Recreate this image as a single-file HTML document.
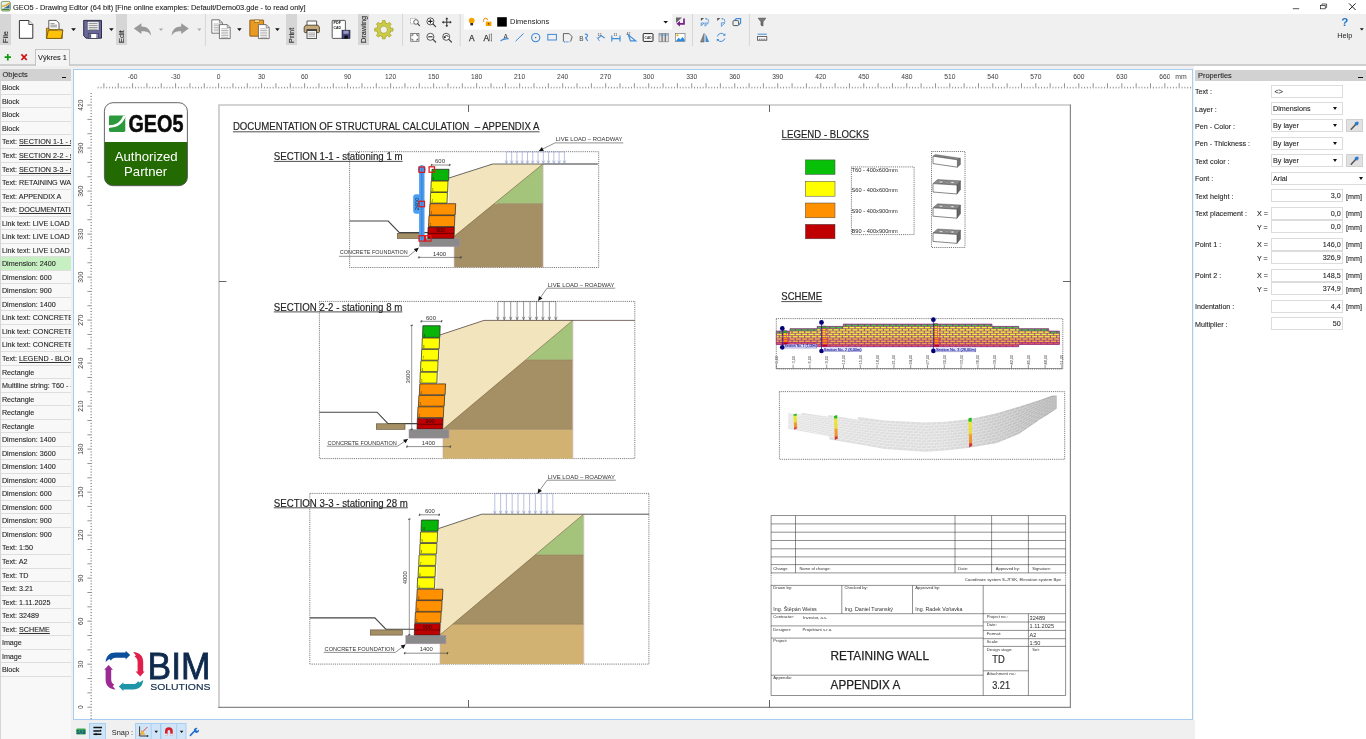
<!DOCTYPE html><html><head><meta charset="utf-8"><title>GEO5 - Drawing Editor</title><style>
*{box-sizing:border-box;margin:0;padding:0}
html,body{width:1366px;height:739px;overflow:hidden;background:#f0f0f0;-webkit-text-stroke:0.1px #333;font-family:"Liberation Sans",sans-serif;font-size:7.4px;color:#1a1a1a}
#wrap{position:absolute;left:0;top:0;width:1366px;height:739px;overflow:hidden;will-change:transform;background:transparent}
#title{position:absolute;left:0;top:0;width:1366px;height:14px;background:#fff}
#title .t{position:absolute;left:13px;top:2.8px;font-size:7.42px;color:#222;white-space:nowrap;letter-spacing:-0.02px}
#tb{position:absolute;left:0;top:14px;width:1366px;height:33px;background:#f0f0f0}
.vlab{position:absolute;top:14px;width:11px;height:31px;background:#d6d6d6}
.vlab span{position:absolute;left:1.2px;bottom:2px;transform-origin:0 100%;transform:translate(9.2px,0) rotate(-90deg);font-size:7.4px;line-height:8px;white-space:nowrap;color:#222}
.sep{position:absolute;width:1px;background:#d0d0d0}
#tabs{position:absolute;left:0;top:47px;width:1366px;height:19px;background:#f0f0f0}
#tabline{position:absolute;left:0;top:64px;width:1366px;height:2px;background:#cfcfcf}
#tab1{position:absolute;left:35px;top:49px;width:35px;height:17px;background:#f4f4f4;border:1px solid #c4c4c4;border-bottom:none;font-size:7.4px;line-height:16px;text-align:center;color:#222}
#lp{position:absolute;left:0;top:69px;width:71px;height:670px;background:#f8f8f8;border-left:1px solid #d6d6d6;overflow:hidden}
.hdr{position:absolute;height:11.5px;background:#d2d2d2;font-size:7.4px;line-height:11px;color:#222}
.row{position:absolute;left:0px;width:70.5px;height:13.55px;background:#f8f8f8;border-bottom:1px solid #dedede;font-size:7.2px;line-height:14.8px;padding-left:0.9px;white-space:nowrap;overflow:hidden;color:#1a1a1a}
.row u{text-decoration:underline}
.row.sel{background:#c6efc2}
#cv{position:absolute;left:73px;top:69px;width:1120px;height:651px;background:#fff;border:1px solid #a8cdf0;overflow:hidden}
#rp{position:absolute;left:1194.4px;top:66px;width:171.6px;height:673px;background:#fff}
.lbl{position:absolute;font-size:7.15px;white-space:nowrap;color:#1a1a1a;line-height:10px}
.inp{position:absolute;left:1271px;width:72px;height:13px;background:#fff;border:1px solid #dcdcdc;font-size:7.2px;line-height:11px;padding:0 2.6px;white-space:nowrap;color:#1a1a1a}
.inp.r{text-align:right}
.inp .arr{position:absolute;right:4.6px;top:4.2px;width:0;height:0;border-left:2.9px solid transparent;border-right:2.9px solid transparent;border-top:3.1px solid #111}
.btn{position:absolute;left:1346px;width:17px;height:13px;background:#e1e1e1;border:1px solid #d0d0d0}
#bb{position:absolute;left:71.5px;top:720px;width:1123px;height:19px;background:#f0f0f0}
svg{position:absolute;left:0;top:0;overflow:visible}
svg text{font-family:"Liberation Sans",sans-serif}
</style></head><body><div id="wrap">
<div id="title"><div class="t">GEO5 - Drawing Editor (64 bit) [Fine online examples: Default/Demo03.gde - to read only]</div></div>
<div id="tb"></div>
<div class="vlab" style="left:0px;width:11px"><span>File</span></div>
<div class="vlab" style="left:116px;width:11px"><span>Edit</span></div>
<div class="vlab" style="left:286px;width:11px"><span>Print</span></div>
<div class="vlab" style="left:358px;width:11px"><span>Drawing</span></div>
<div id="tabs"></div><div id="tabline"></div><div id="tab1">Výkres 1</div>
<div id="lp">
<div class="hdr" style="left:-1px;top:0;width:72px;padding-left:2.6px">Objects<span style="position:absolute;right:5.6px;top:7.5px;width:4.6px;height:1.1px;background:#111"></span></div>
<div class="row" style="top:12.30px">Block</div>
<div class="row" style="top:25.84px">Block</div>
<div class="row" style="top:39.37px">Block</div>
<div class="row" style="top:52.91px">Block</div>
<div class="row" style="top:66.44px">Text: <u>SECTION 1-1 - stationing</u></div>
<div class="row" style="top:79.97px">Text: <u>SECTION 2-2 - stationing</u></div>
<div class="row" style="top:93.51px">Text: <u>SECTION 3-3 - stationing</u></div>
<div class="row" style="top:107.05px">Text: RETAINING WALL</div>
<div class="row" style="top:120.58px">Text: APPENDIX A</div>
<div class="row" style="top:134.12px">Text: <u>DOCUMENTATION OF</u></div>
<div class="row" style="top:147.65px">Link text: LIVE LOAD</div>
<div class="row" style="top:161.19px">Link text: LIVE LOAD</div>
<div class="row" style="top:174.72px">Link text: LIVE LOAD</div>
<div class="row sel" style="top:188.26px">Dimension: 2400</div>
<div class="row" style="top:201.79px">Dimension: 600</div>
<div class="row" style="top:215.33px">Dimension: 900</div>
<div class="row" style="top:228.86px">Dimension: 1400</div>
<div class="row" style="top:242.40px">Link text: CONCRETE</div>
<div class="row" style="top:255.93px">Link text: CONCRETE</div>
<div class="row" style="top:269.47px">Link text: CONCRETE</div>
<div class="row" style="top:283.00px">Text: <u>LEGEND - BLOCKS</u></div>
<div class="row" style="top:296.54px">Rectangle</div>
<div class="row" style="top:310.07px">Multiline string: T60 - 400</div>
<div class="row" style="top:323.61px">Rectangle</div>
<div class="row" style="top:337.14px">Rectangle</div>
<div class="row" style="top:350.68px">Rectangle</div>
<div class="row" style="top:364.21px">Dimension: 1400</div>
<div class="row" style="top:377.75px">Dimension: 3600</div>
<div class="row" style="top:391.28px">Dimension: 1400</div>
<div class="row" style="top:404.81px">Dimension: 4000</div>
<div class="row" style="top:418.35px">Dimension: 600</div>
<div class="row" style="top:431.88px">Dimension: 600</div>
<div class="row" style="top:445.42px">Dimension: 900</div>
<div class="row" style="top:458.96px">Dimension: 900</div>
<div class="row" style="top:472.49px">Text: 1:50</div>
<div class="row" style="top:486.03px">Text: A2</div>
<div class="row" style="top:499.56px">Text: TD</div>
<div class="row" style="top:513.10px">Text: 3.21</div>
<div class="row" style="top:526.63px">Text: 1.11.2025</div>
<div class="row" style="top:540.16px">Text: 32489</div>
<div class="row" style="top:553.70px">Text: <u>SCHEME</u></div>
<div class="row" style="top:567.24px">Image</div>
<div class="row" style="top:580.77px">Image</div>
<div class="row" style="top:594.30px">Block</div>
</div>
<div id="cv"></div>
<div id="rp"></div>
<div class="hdr" style="left:1195px;top:69.5px;width:171px;padding-left:3px">Properties<span style="position:absolute;right:3.4px;top:7.5px;width:4.6px;height:1.1px;background:#111"></span></div>
<div class="lbl" style="left:1195px;top:87.0px">Text :</div>
<div class="inp" style="top:84.5px">&lt;&gt;</div>
<div class="lbl" style="left:1195px;top:104.5px">Layer :</div>
<div class="inp" style="top:102px;padding-left:1px">Dimensions<span class="arr"></span></div>
<div class="lbl" style="left:1195px;top:121.8px">Pen - Color :</div>
<div class="inp" style="top:119.3px;padding-left:1px">By layer<span class="arr"></span></div>
<div class="btn" style="top:119.3px"><svg width="17" height="13" viewBox="0 0 17 13" style="left:-1px;top:-1px"><path d="M5.2 10.2 L9.6 5.4" stroke="#555" stroke-width="1.5" stroke-linecap="round"/><path d="M9 3.6 L11.6 6.2" stroke="#2a7bd0" stroke-width="1.6"/><circle cx="11.2" cy="3.9" r="1.5" fill="#2a7bd0"/></svg></div>
<div class="lbl" style="left:1195px;top:139.3px">Pen - Thickness :</div>
<div class="inp" style="top:136.8px;padding-left:1px">By layer<span class="arr"></span></div>
<div class="lbl" style="left:1195px;top:156.8px">Text color :</div>
<div class="inp" style="top:154.3px;padding-left:1px">By layer<span class="arr"></span></div>
<div class="btn" style="top:154.3px"><svg width="17" height="13" viewBox="0 0 17 13" style="left:-1px;top:-1px"><path d="M5.2 10.2 L9.6 5.4" stroke="#555" stroke-width="1.5" stroke-linecap="round"/><path d="M9 3.6 L11.6 6.2" stroke="#2a7bd0" stroke-width="1.6"/><circle cx="11.2" cy="3.9" r="1.5" fill="#2a7bd0"/></svg></div>
<div class="lbl" style="left:1195px;top:174.3px">Font :</div>
<div class="inp" style="top:171.8px;padding-left:1px;width:95px;border-right:none">Arial<span class="arr" style="right:3.4px"></span></div>
<div class="lbl" style="left:1195px;top:191.9px">Text height :</div>
<div class="inp r" style="top:189.4px;padding-right:1.2px">3,0</div>
<div class="lbl" style="left:1346px;top:191.9px">[mm]</div>
<div class="lbl" style="left:1195px;top:209.3px">Text placement :</div>
<div class="lbl" style="left:1257px;top:209.3px">X =</div>
<div class="inp r" style="top:206.8px;padding-right:1.2px">0,0</div>
<div class="lbl" style="left:1346px;top:209.3px">[mm]</div>
<div class="lbl" style="left:1257px;top:222.9px">Y =</div>
<div class="inp r" style="top:220.4px;padding-right:1.2px">0,0</div>
<div class="lbl" style="left:1346px;top:222.9px">[mm]</div>
<div class="lbl" style="left:1195px;top:240.3px">Point 1 :</div>
<div class="lbl" style="left:1257px;top:240.3px">X =</div>
<div class="inp r" style="top:237.8px;padding-right:1.2px">146,0</div>
<div class="lbl" style="left:1346px;top:240.3px">[mm]</div>
<div class="lbl" style="left:1257px;top:253.9px">Y =</div>
<div class="inp r" style="top:251.4px;padding-right:1.2px">326,9</div>
<div class="lbl" style="left:1346px;top:253.9px">[mm]</div>
<div class="lbl" style="left:1195px;top:271.2px">Point 2 :</div>
<div class="lbl" style="left:1257px;top:271.2px">X =</div>
<div class="inp r" style="top:268.7px;padding-right:1.2px">148,5</div>
<div class="lbl" style="left:1346px;top:271.2px">[mm]</div>
<div class="lbl" style="left:1257px;top:284.8px">Y =</div>
<div class="inp r" style="top:282.3px;padding-right:1.2px">374,9</div>
<div class="lbl" style="left:1346px;top:284.8px">[mm]</div>
<div class="lbl" style="left:1195px;top:302.2px">Indentation :</div>
<div class="inp r" style="top:299.7px;padding-right:1.2px">4,4</div>
<div class="lbl" style="left:1346px;top:302.2px">[mm]</div>
<div class="lbl" style="left:1195px;top:319.6px">Multiplier :</div>
<div class="inp r" style="top:317.1px;padding-right:1.2px">50</div>
<div id="bb"></div>
<svg width="1366" height="739" viewBox="0 0 1366 739"><path d="M98.17 86.8V88.4M101.04 86.8V88.4M103.9 83.2V88.4M106.77 86.8V88.4M109.64 86.8V88.4M112.51 86.8V88.4M115.37 86.8V88.4M118.24 83.2V88.4M121.11 86.8V88.4M123.98 86.8V88.4M126.84 86.8V88.4M129.71 86.8V88.4M132.58 83.2V88.4M135.45 86.8V88.4M138.31 86.8V88.4M141.18 86.8V88.4M144.05 86.8V88.4M146.91 83.2V88.4M149.78 86.8V88.4M152.65 86.8V88.4M155.52 86.8V88.4M158.38 86.8V88.4M161.25 83.2V88.4M164.12 86.8V88.4M166.99 86.8V88.4M169.85 86.8V88.4M172.72 86.8V88.4M175.59 83.2V88.4M178.46 86.8V88.4M181.32 86.8V88.4M184.19 86.8V88.4M187.06 86.8V88.4M189.93 83.2V88.4M192.79 86.8V88.4M195.66 86.8V88.4M198.53 86.8V88.4M201.4 86.8V88.4M204.26 83.2V88.4M207.13 86.8V88.4M210 86.8V88.4M212.87 86.8V88.4M215.73 86.8V88.4M218.6 83.2V88.4M221.47 86.8V88.4M224.33 86.8V88.4M227.2 86.8V88.4M230.07 86.8V88.4M232.94 83.2V88.4M235.8 86.8V88.4M238.67 86.8V88.4M241.54 86.8V88.4M244.41 86.8V88.4M247.27 83.2V88.4M250.14 86.8V88.4M253.01 86.8V88.4M255.88 86.8V88.4M258.74 86.8V88.4M261.61 83.2V88.4M264.48 86.8V88.4M267.35 86.8V88.4M270.21 86.8V88.4M273.08 86.8V88.4M275.95 83.2V88.4M278.82 86.8V88.4M281.68 86.8V88.4M284.55 86.8V88.4M287.42 86.8V88.4M290.28 83.2V88.4M293.15 86.8V88.4M296.02 86.8V88.4M298.89 86.8V88.4M301.75 86.8V88.4M304.62 83.2V88.4M307.49 86.8V88.4M310.36 86.8V88.4M313.22 86.8V88.4M316.09 86.8V88.4M318.96 83.2V88.4M321.83 86.8V88.4M324.69 86.8V88.4M327.56 86.8V88.4M330.43 86.8V88.4M333.3 83.2V88.4M336.16 86.8V88.4M339.03 86.8V88.4M341.9 86.8V88.4M344.77 86.8V88.4M347.63 83.2V88.4M350.5 86.8V88.4M353.37 86.8V88.4M356.24 86.8V88.4M359.1 86.8V88.4M361.97 83.2V88.4M364.84 86.8V88.4M367.7 86.8V88.4M370.57 86.8V88.4M373.44 86.8V88.4M376.31 83.2V88.4M379.17 86.8V88.4M382.04 86.8V88.4M384.91 86.8V88.4M387.78 86.8V88.4M390.64 83.2V88.4M393.51 86.8V88.4M396.38 86.8V88.4M399.25 86.8V88.4M402.11 86.8V88.4M404.98 83.2V88.4M407.85 86.8V88.4M410.72 86.8V88.4M413.58 86.8V88.4M416.45 86.8V88.4M419.32 83.2V88.4M422.19 86.8V88.4M425.05 86.8V88.4M427.92 86.8V88.4M430.79 86.8V88.4M433.65 83.2V88.4M436.52 86.8V88.4M439.39 86.8V88.4M442.26 86.8V88.4M445.12 86.8V88.4M447.99 83.2V88.4M450.86 86.8V88.4M453.73 86.8V88.4M456.59 86.8V88.4M459.46 86.8V88.4M462.33 83.2V88.4M465.2 86.8V88.4M468.06 86.8V88.4M470.93 86.8V88.4M473.8 86.8V88.4M476.67 83.2V88.4M479.53 86.8V88.4M482.4 86.8V88.4M485.27 86.8V88.4M488.14 86.8V88.4M491 83.2V88.4M493.87 86.8V88.4M496.74 86.8V88.4M499.61 86.8V88.4M502.47 86.8V88.4M505.34 83.2V88.4M508.21 86.8V88.4M511.07 86.8V88.4M513.94 86.8V88.4M516.81 86.8V88.4M519.68 83.2V88.4M522.54 86.8V88.4M525.41 86.8V88.4M528.28 86.8V88.4M531.15 86.8V88.4M534.01 83.2V88.4M536.88 86.8V88.4M539.75 86.8V88.4M542.62 86.8V88.4M545.48 86.8V88.4M548.35 83.2V88.4M551.22 86.8V88.4M554.09 86.8V88.4M556.95 86.8V88.4M559.82 86.8V88.4M562.69 83.2V88.4M565.56 86.8V88.4M568.42 86.8V88.4M571.29 86.8V88.4M574.16 86.8V88.4M577.02 83.2V88.4M579.89 86.8V88.4M582.76 86.8V88.4M585.63 86.8V88.4M588.49 86.8V88.4M591.36 83.2V88.4M594.23 86.8V88.4M597.1 86.8V88.4M599.96 86.8V88.4M602.83 86.8V88.4M605.7 83.2V88.4M608.57 86.8V88.4M611.43 86.8V88.4M614.3 86.8V88.4M617.17 86.8V88.4M620.04 83.2V88.4M622.9 86.8V88.4M625.77 86.8V88.4M628.64 86.8V88.4M631.51 86.8V88.4M634.37 83.2V88.4M637.24 86.8V88.4M640.11 86.8V88.4M642.98 86.8V88.4M645.84 86.8V88.4M648.71 83.2V88.4M651.58 86.8V88.4M654.44 86.8V88.4M657.31 86.8V88.4M660.18 86.8V88.4M663.05 83.2V88.4M665.91 86.8V88.4M668.78 86.8V88.4M671.65 86.8V88.4M674.52 86.8V88.4M677.38 83.2V88.4M680.25 86.8V88.4M683.12 86.8V88.4M685.99 86.8V88.4M688.85 86.8V88.4M691.72 83.2V88.4M694.59 86.8V88.4M697.46 86.8V88.4M700.32 86.8V88.4M703.19 86.8V88.4M706.06 83.2V88.4M708.93 86.8V88.4M711.79 86.8V88.4M714.66 86.8V88.4M717.53 86.8V88.4M720.39 83.2V88.4M723.26 86.8V88.4M726.13 86.8V88.4M729 86.8V88.4M731.86 86.8V88.4M734.73 83.2V88.4M737.6 86.8V88.4M740.47 86.8V88.4M743.33 86.8V88.4M746.2 86.8V88.4M749.07 83.2V88.4M751.94 86.8V88.4M754.8 86.8V88.4M757.67 86.8V88.4M760.54 86.8V88.4M763.41 83.2V88.4M766.27 86.8V88.4M769.14 86.8V88.4M772.01 86.8V88.4M774.88 86.8V88.4M777.74 83.2V88.4M780.61 86.8V88.4M783.48 86.8V88.4M786.35 86.8V88.4M789.21 86.8V88.4M792.08 83.2V88.4M794.95 86.8V88.4M797.81 86.8V88.4M800.68 86.8V88.4M803.55 86.8V88.4M806.42 83.2V88.4M809.28 86.8V88.4M812.15 86.8V88.4M815.02 86.8V88.4M817.89 86.8V88.4M820.75 83.2V88.4M823.62 86.8V88.4M826.49 86.8V88.4M829.36 86.8V88.4M832.22 86.8V88.4M835.09 83.2V88.4M837.96 86.8V88.4M840.83 86.8V88.4M843.69 86.8V88.4M846.56 86.8V88.4M849.43 83.2V88.4M852.3 86.8V88.4M855.16 86.8V88.4M858.03 86.8V88.4M860.9 86.8V88.4M863.76 83.2V88.4M866.63 86.8V88.4M869.5 86.8V88.4M872.37 86.8V88.4M875.23 86.8V88.4M878.1 83.2V88.4M880.97 86.8V88.4M883.84 86.8V88.4M886.7 86.8V88.4M889.57 86.8V88.4M892.44 83.2V88.4M895.31 86.8V88.4M898.17 86.8V88.4M901.04 86.8V88.4M903.91 86.8V88.4M906.78 83.2V88.4M909.64 86.8V88.4M912.51 86.8V88.4M915.38 86.8V88.4M918.25 86.8V88.4M921.11 83.2V88.4M923.98 86.8V88.4M926.85 86.8V88.4M929.72 86.8V88.4M932.58 86.8V88.4M935.45 83.2V88.4M938.32 86.8V88.4M941.18 86.8V88.4M944.05 86.8V88.4M946.92 86.8V88.4M949.79 83.2V88.4M952.65 86.8V88.4M955.52 86.8V88.4M958.39 86.8V88.4M961.26 86.8V88.4M964.12 83.2V88.4M966.99 86.8V88.4M969.86 86.8V88.4M972.73 86.8V88.4M975.59 86.8V88.4M978.46 83.2V88.4M981.33 86.8V88.4M984.2 86.8V88.4M987.06 86.8V88.4M989.93 86.8V88.4M992.8 83.2V88.4M995.67 86.8V88.4M998.53 86.8V88.4M1001.4 86.8V88.4M1004.27 86.8V88.4M1007.13 83.2V88.4M1010 86.8V88.4M1012.87 86.8V88.4M1015.74 86.8V88.4M1018.6 86.8V88.4M1021.47 83.2V88.4M1024.34 86.8V88.4M1027.21 86.8V88.4M1030.07 86.8V88.4M1032.94 86.8V88.4M1035.81 83.2V88.4M1038.68 86.8V88.4M1041.54 86.8V88.4M1044.41 86.8V88.4M1047.28 86.8V88.4M1050.15 83.2V88.4M1053.01 86.8V88.4M1055.88 86.8V88.4M1058.75 86.8V88.4M1061.62 86.8V88.4M1064.48 83.2V88.4M1067.35 86.8V88.4M1070.22 86.8V88.4M1073.09 86.8V88.4M1075.95 86.8V88.4M1078.82 83.2V88.4M1081.69 86.8V88.4M1084.55 86.8V88.4M1087.42 86.8V88.4M1090.29 86.8V88.4M1093.16 83.2V88.4M1096.02 86.8V88.4M1098.89 86.8V88.4M1101.76 86.8V88.4M1104.63 86.8V88.4M1107.49 83.2V88.4M1110.36 86.8V88.4M1113.23 86.8V88.4M1116.1 86.8V88.4M1118.96 86.8V88.4M1121.83 83.2V88.4M1124.7 86.8V88.4M1127.57 86.8V88.4M1130.43 86.8V88.4M1133.3 86.8V88.4M1136.17 83.2V88.4M1139.04 86.8V88.4M1141.9 86.8V88.4M1144.77 86.8V88.4M1147.64 86.8V88.4M1150.5 83.2V88.4M1153.37 86.8V88.4M1156.24 86.8V88.4M1159.11 86.8V88.4M1161.97 86.8V88.4M1164.84 83.2V88.4M1167.71 86.8V88.4M1170.58 86.8V88.4M1173.44 86.8V88.4M1176.31 86.8V88.4M1179.18 83.2V88.4M1182.05 86.8V88.4M1184.91 86.8V88.4M1187.78 86.8V88.4M1190.65 86.8V88.4" stroke="#777" stroke-width="0.8" fill="none"/><text x="132.58" y="79.4" font-size="6.7" fill="#3a3a3a" text-anchor="middle">-60</text><text x="175.59" y="79.4" font-size="6.7" fill="#3a3a3a" text-anchor="middle">-30</text><text x="218.6" y="79.4" font-size="6.7" fill="#3a3a3a" text-anchor="middle">0</text><text x="261.61" y="79.4" font-size="6.7" fill="#3a3a3a" text-anchor="middle">30</text><text x="304.62" y="79.4" font-size="6.7" fill="#3a3a3a" text-anchor="middle">60</text><text x="347.63" y="79.4" font-size="6.7" fill="#3a3a3a" text-anchor="middle">90</text><text x="390.64" y="79.4" font-size="6.7" fill="#3a3a3a" text-anchor="middle">120</text><text x="433.65" y="79.4" font-size="6.7" fill="#3a3a3a" text-anchor="middle">150</text><text x="476.67" y="79.4" font-size="6.7" fill="#3a3a3a" text-anchor="middle">180</text><text x="519.68" y="79.4" font-size="6.7" fill="#3a3a3a" text-anchor="middle">210</text><text x="562.69" y="79.4" font-size="6.7" fill="#3a3a3a" text-anchor="middle">240</text><text x="605.7" y="79.4" font-size="6.7" fill="#3a3a3a" text-anchor="middle">270</text><text x="648.71" y="79.4" font-size="6.7" fill="#3a3a3a" text-anchor="middle">300</text><text x="691.72" y="79.4" font-size="6.7" fill="#3a3a3a" text-anchor="middle">330</text><text x="734.73" y="79.4" font-size="6.7" fill="#3a3a3a" text-anchor="middle">360</text><text x="777.74" y="79.4" font-size="6.7" fill="#3a3a3a" text-anchor="middle">390</text><text x="820.75" y="79.4" font-size="6.7" fill="#3a3a3a" text-anchor="middle">420</text><text x="863.76" y="79.4" font-size="6.7" fill="#3a3a3a" text-anchor="middle">450</text><text x="906.78" y="79.4" font-size="6.7" fill="#3a3a3a" text-anchor="middle">480</text><text x="949.79" y="79.4" font-size="6.7" fill="#3a3a3a" text-anchor="middle">510</text><text x="992.8" y="79.4" font-size="6.7" fill="#3a3a3a" text-anchor="middle">540</text><text x="1035.81" y="79.4" font-size="6.7" fill="#3a3a3a" text-anchor="middle">570</text><text x="1078.82" y="79.4" font-size="6.7" fill="#3a3a3a" text-anchor="middle">600</text><text x="1121.83" y="79.4" font-size="6.7" fill="#3a3a3a" text-anchor="middle">630</text><text x="1164.84" y="79.4" font-size="6.7" fill="#3a3a3a" text-anchor="middle">660</text><rect x="1169.8" y="72" width="21.5" height="10" fill="#fff"/><text x="1181" y="79.4" font-size="6.9" fill="#444" text-anchor="middle">mm</text><path d="M90.4 93.58H92M90.4 96.44H92M90.4 99.31H92M90.4 102.18H92M87.4 105.05H92M90.4 107.91H92M90.4 110.78H92M90.4 113.65H92M90.4 116.52H92M87.4 119.38H92M90.4 122.25H92M90.4 125.12H92M90.4 127.99H92M90.4 130.85H92M87.4 133.72H92M90.4 136.59H92M90.4 139.45H92M90.4 142.32H92M90.4 145.19H92M87.4 148.06H92M90.4 150.92H92M90.4 153.79H92M90.4 156.66H92M90.4 159.53H92M87.4 162.39H92M90.4 165.26H92M90.4 168.13H92M90.4 171H92M90.4 173.86H92M87.4 176.73H92M90.4 179.6H92M90.4 182.47H92M90.4 185.33H92M90.4 188.2H92M87.4 191.07H92M90.4 193.94H92M90.4 196.8H92M90.4 199.67H92M90.4 202.54H92M87.4 205.41H92M90.4 208.27H92M90.4 211.14H92M90.4 214.01H92M90.4 216.87H92M87.4 219.74H92M90.4 222.61H92M90.4 225.48H92M90.4 228.34H92M90.4 231.21H92M87.4 234.08H92M90.4 236.95H92M90.4 239.81H92M90.4 242.68H92M90.4 245.55H92M87.4 248.42H92M90.4 251.28H92M90.4 254.15H92M90.4 257.02H92M90.4 259.89H92M87.4 262.75H92M90.4 265.62H92M90.4 268.49H92M90.4 271.36H92M90.4 274.22H92M87.4 277.09H92M90.4 279.96H92M90.4 282.82H92M90.4 285.69H92M90.4 288.56H92M87.4 291.43H92M90.4 294.29H92M90.4 297.16H92M90.4 300.03H92M90.4 302.9H92M87.4 305.76H92M90.4 308.63H92M90.4 311.5H92M90.4 314.37H92M90.4 317.23H92M87.4 320.1H92M90.4 322.97H92M90.4 325.84H92M90.4 328.7H92M90.4 331.57H92M87.4 334.44H92M90.4 337.31H92M90.4 340.17H92M90.4 343.04H92M90.4 345.91H92M87.4 348.78H92M90.4 351.64H92M90.4 354.51H92M90.4 357.38H92M90.4 360.24H92M87.4 363.11H92M90.4 365.98H92M90.4 368.85H92M90.4 371.71H92M90.4 374.58H92M87.4 377.45H92M90.4 380.32H92M90.4 383.18H92M90.4 386.05H92M90.4 388.92H92M87.4 391.79H92M90.4 394.65H92M90.4 397.52H92M90.4 400.39H92M90.4 403.26H92M87.4 406.12H92M90.4 408.99H92M90.4 411.86H92M90.4 414.73H92M90.4 417.59H92M87.4 420.46H92M90.4 423.33H92M90.4 426.19H92M90.4 429.06H92M90.4 431.93H92M87.4 434.8H92M90.4 437.66H92M90.4 440.53H92M90.4 443.4H92M90.4 446.27H92M87.4 449.13H92M90.4 452H92M90.4 454.87H92M90.4 457.74H92M90.4 460.6H92M87.4 463.47H92M90.4 466.34H92M90.4 469.21H92M90.4 472.07H92M90.4 474.94H92M87.4 477.81H92M90.4 480.68H92M90.4 483.54H92M90.4 486.41H92M90.4 489.28H92M87.4 492.15H92M90.4 495.01H92M90.4 497.88H92M90.4 500.75H92M90.4 503.61H92M87.4 506.48H92M90.4 509.35H92M90.4 512.22H92M90.4 515.08H92M90.4 517.95H92M87.4 520.82H92M90.4 523.69H92M90.4 526.55H92M90.4 529.42H92M90.4 532.29H92M87.4 535.16H92M90.4 538.02H92M90.4 540.89H92M90.4 543.76H92M90.4 546.63H92M87.4 549.49H92M90.4 552.36H92M90.4 555.23H92M90.4 558.1H92M90.4 560.96H92M87.4 563.83H92M90.4 566.7H92M90.4 569.56H92M90.4 572.43H92M90.4 575.3H92M87.4 578.17H92M90.4 581.03H92M90.4 583.9H92M90.4 586.77H92M90.4 589.64H92M87.4 592.5H92M90.4 595.37H92M90.4 598.24H92M90.4 601.11H92M90.4 603.97H92M87.4 606.84H92M90.4 609.71H92M90.4 612.58H92M90.4 615.44H92M90.4 618.31H92M87.4 621.18H92M90.4 624.05H92M90.4 626.91H92M90.4 629.78H92M90.4 632.65H92M87.4 635.52H92M90.4 638.38H92M90.4 641.25H92M90.4 644.12H92M90.4 646.98H92M87.4 649.85H92M90.4 652.72H92M90.4 655.59H92M90.4 658.45H92M90.4 661.32H92M87.4 664.19H92M90.4 667.06H92M90.4 669.92H92M90.4 672.79H92M90.4 675.66H92M87.4 678.53H92M90.4 681.39H92M90.4 684.26H92M90.4 687.13H92M90.4 690H92M87.4 692.86H92M90.4 695.73H92M90.4 698.6H92M90.4 701.47H92M90.4 704.33H92M87.4 707.2H92M90.4 710.07H92M90.4 712.93H92M90.4 715.8H92M90.4 718.67H92" stroke="#777" stroke-width="0.8" fill="none"/><text transform="translate(83.4,707.2) rotate(-90)" font-size="6.7" fill="#3a3a3a" text-anchor="middle">0</text><text transform="translate(83.4,664.19) rotate(-90)" font-size="6.7" fill="#3a3a3a" text-anchor="middle">30</text><text transform="translate(83.4,621.18) rotate(-90)" font-size="6.7" fill="#3a3a3a" text-anchor="middle">60</text><text transform="translate(83.4,578.17) rotate(-90)" font-size="6.7" fill="#3a3a3a" text-anchor="middle">90</text><text transform="translate(83.4,535.16) rotate(-90)" font-size="6.7" fill="#3a3a3a" text-anchor="middle">120</text><text transform="translate(83.4,492.15) rotate(-90)" font-size="6.7" fill="#3a3a3a" text-anchor="middle">150</text><text transform="translate(83.4,449.13) rotate(-90)" font-size="6.7" fill="#3a3a3a" text-anchor="middle">180</text><text transform="translate(83.4,406.12) rotate(-90)" font-size="6.7" fill="#3a3a3a" text-anchor="middle">210</text><text transform="translate(83.4,363.11) rotate(-90)" font-size="6.7" fill="#3a3a3a" text-anchor="middle">240</text><text transform="translate(83.4,320.1) rotate(-90)" font-size="6.7" fill="#3a3a3a" text-anchor="middle">270</text><text transform="translate(83.4,277.09) rotate(-90)" font-size="6.7" fill="#3a3a3a" text-anchor="middle">300</text><text transform="translate(83.4,234.08) rotate(-90)" font-size="6.7" fill="#3a3a3a" text-anchor="middle">330</text><text transform="translate(83.4,191.07) rotate(-90)" font-size="6.7" fill="#3a3a3a" text-anchor="middle">360</text><text transform="translate(83.4,148.06) rotate(-90)" font-size="6.7" fill="#3a3a3a" text-anchor="middle">390</text><text transform="translate(83.4,105.05) rotate(-90)" font-size="6.7" fill="#3a3a3a" text-anchor="middle">420</text><rect x="219.0" y="105.0" width="851.4" height="602.4" fill="#fff"/><path d="M218.2 105.0H1070.4M219.0 105.0V707.4" stroke="#c6c6c6" stroke-width="1.6" fill="none"/><path d="M1070.4 104.4V708.0M218.2 707.4H1070.4" stroke="#888" stroke-width="1.2" fill="none"/><path d="M468.5 105.0v7M468.5 707.4v-7.4M769.5 105.0v7M769.5 707.4v-7.4M219.0 281.5h7.4M1070.4 281.5h-7.4" stroke="#555" stroke-width="0.9" fill="none"/><clipPath id="bc"><rect x="104.4" y="102.7" width="83" height="83" rx="8.5"/></clipPath><g clip-path="url(#bc)"><rect x="104" y="102" width="84" height="40" fill="#fff"/><rect x="104" y="142" width="84" height="45" fill="#236a02"/></g><rect x="104.4" y="102.7" width="83" height="83" rx="8.5" fill="none" stroke="#555" stroke-width="0.9"/><rect x="109" y="115.6" width="16.3" height="16.4" rx="1.4" fill="#2c9a3c"/><path d="M108.6 126.6 c8.4 -0.2 12.6 -3.2 16 -10.6" fill="none" stroke="#fff" stroke-width="2.6"/><text x="128.4" y="131.7" font-size="23.4" font-weight="bold" fill="#0a0a0a" stroke="#0a0a0a" stroke-width="0.5" textLength="55" lengthAdjust="spacingAndGlyphs">GEO5</text><text x="146.2" y="160.6" font-size="13" fill="#fff" text-anchor="middle" textLength="63" lengthAdjust="spacingAndGlyphs">Authorized</text><text x="145.6" y="176" font-size="13" fill="#fff" text-anchor="middle" textLength="43" lengthAdjust="spacingAndGlyphs">Partner</text><path d="M105.6 662 c0.6 -6.4 4 -9.6 10 -9.6 h10 v-1.6 l4.6 4.2 l-4.6 4.6 v-1.8 h-9.6 c-2.6 0 -4 0.8 -5 2.6 l-1.8 -1.4 z" fill="#0b4f9c"/><path d="M133.2 652 c6.6 0.4 10 4 10 10 v9.6 h1.4 l-4.4 4.8 l-4.6 -4.8 h2 v-9.4 c0 -2.8 -1 -4.4 -3 -5.4 l1.2 -1.6 z" fill="#e0204a"/><path d="M143.2 680 c-0.6 6.4 -4 9.4 -10 9.4 h-9.8 v1.6 l-4.6 -4.4 l4.6 -4.4 v1.8 h9.4 c2.6 0 4.2 -0.8 5.2 -2.8 l1.6 1.4 z" fill="#1f96a8"/><path d="M115.4 689.6 c-6.4 -0.6 -9.8 -4 -9.8 -10 v-9.8 h-1.4 l4.4 -4.8 l4.4 4.8 h-1.8 v9.4 c0 2.8 1 4.4 3 5.4 l-1.4 1.6 z" fill="#9b2a92"/><text x="147.6" y="678.6" font-size="36.6" fill="#0f2a4d" stroke="#0f2a4d" stroke-width="0.8" textLength="63" lengthAdjust="spacingAndGlyphs">BIM</text><text x="150.2" y="689.7" font-size="9.1" fill="#0f2a4d" stroke="#0f2a4d" stroke-width="0.15" textLength="60.2" lengthAdjust="spacingAndGlyphs">SOLUTIONS</text><text x="232.9" y="130.2" font-size="10.2" fill="#222" stroke="#222" stroke-width="0.15" textLength="306.6" lengthAdjust="spacingAndGlyphs">DOCUMENTATION OF STRUCTURAL CALCULATION &#160;– APPENDIX A</text><path d="M232.9 131.8H539.5" stroke="#222" stroke-width="0.8"/><text x="273.8" y="160.2" font-size="10.2" fill="#222" stroke="#222" stroke-width="0.15" textLength="128.8" lengthAdjust="spacingAndGlyphs">SECTION 1-1 - stationing 1 m</text><path d="M273.8 161.4H402.6" stroke="#222" stroke-width="0.8"/><rect x="349.6" y="151.7" width="249.1" height="115.8" stroke="#444" stroke-width="0.8" stroke-dasharray="0.9 1" fill="none"/><rect x="454.2" y="203.5" width="88.7" height="63.8" fill="#a59065"/><rect x="490" y="164" width="52.9" height="39.5" fill="#a5c47b"/><polygon points="449,177.9 492.7,164 542.9,164 454.2,236.3 454.2,239 448,239" fill="#f2e4bc"/><path d="M542.9 164L454.2 236.3" stroke="#6e5e3c" stroke-width="0.6" fill="none"/><path d="M496.8 203.5H542.9" stroke="#8a7c58" stroke-width="0.5"/><path d="M543.1 164V267.3M454.2 238.6V267.3" stroke="#c4a4ac" stroke-width="0.6"/><path d="M448.6 178.1L492.7 164H542.9" stroke="#444" stroke-width="0.8" fill="none"/><path d="M542.9 164H597.8" stroke="#777" stroke-width="1.4" fill="none"/><path d="M506.4 151.9V163.6M505.1 160.6L506.4 163.6L507.7 160.6M511.67 151.9V163.6M510.37 160.6L511.67 163.6L512.97 160.6M516.95 151.9V163.6M515.65 160.6L516.95 163.6L518.25 160.6M522.22 151.9V163.6M520.92 160.6L522.22 163.6L523.52 160.6M527.49 151.9V163.6M526.19 160.6L527.49 163.6L528.79 160.6M532.76 151.9V163.6M531.46 160.6L532.76 163.6L534.06 160.6M538.04 151.9V163.6M536.74 160.6L538.04 163.6L539.34 160.6M543.31 151.9V163.6M542.01 160.6L543.31 163.6L544.61 160.6M548.58 151.9V163.6M547.28 160.6L548.58 163.6L549.88 160.6M553.85 151.9V163.6M552.55 160.6L553.85 163.6L555.15 160.6M559.13 151.9V163.6M557.83 160.6L559.13 163.6L560.43 160.6M564.4 151.9V163.6M563.1 160.6L564.4 163.6L565.7 160.6" stroke="#8c98c8" stroke-width="0.6" fill="none"/><path d="M506.4 151.9H564.4" stroke="#8c98c8" stroke-width="0.5"/><path d="M349.6 221H388.2L399.4 232.6H428" stroke="#444" stroke-width="1.1" fill="none"/><rect x="397.4" y="233.3" width="22.1" height="5.1" fill="#a59065" stroke="#5a4c2c" stroke-width="0.6"/><rect x="419.5" y="238.6" width="40.4" height="8" fill="#8a8a8a" stroke="#a890a8" stroke-width="0.5"/><polygon points="428.1,227.1 454.4,227.1 454,238.4 427.7,238.4" fill="#c00000" stroke="#222" stroke-width="0.7" stroke-linejoin="round"/><path d="M427.9 233.4H454.2" stroke="#300" stroke-width="0.6"/><polygon points="429,215.6 454.9,215.6 454.4,226.5 428.5,226.5" fill="#ff9000" stroke="#222" stroke-width="0.7" stroke-linejoin="round"/><text x="429.7" y="225.7" font-size="2.6" fill="#222">2</text><polygon points="429.9,203.7 455.7,203.7 455.2,215 429.4,215" fill="#ff9000" stroke="#222" stroke-width="0.7" stroke-linejoin="round"/><text x="430.6" y="214.2" font-size="2.6" fill="#222">3</text><polygon points="430.65,192.5 447.45,192.5 447,203.1 430.2,203.1" fill="#ffff00" stroke="#222" stroke-width="0.7" stroke-linejoin="round"/><text x="431.4" y="202.3" font-size="2.6" fill="#222">4</text><polygon points="431.25,181 448.05,181 447.6,191.9 430.8,191.9" fill="#ffff00" stroke="#222" stroke-width="0.7" stroke-linejoin="round"/><text x="432" y="191.1" font-size="2.6" fill="#222">5</text><polygon points="432,169.3 449,169.3 448.6,180.6 431.6,180.6" fill="#08b408" stroke="#222" stroke-width="0.7" stroke-linejoin="round"/><text x="432.8" y="179.8" font-size="2.6" fill="#222">6</text><text x="440.6" y="232.4" font-size="5.3" fill="#300" text-anchor="middle">900</text><path d="M431.1 165H450.2" stroke="#444" stroke-width="0.6"/><path d="M430.8 165.8L432.4 164.2M431.6 163.8V166.2" stroke="#333" stroke-width="0.6"/><path d="M448.9 165.8L450.5 164.2M449.7 163.8V166.2" stroke="#333" stroke-width="0.6"/><text x="440" y="163.4" font-size="5.9" fill="#333" text-anchor="middle">600</text><path d="M418.4 257.4H461.4" stroke="#444" stroke-width="0.6"/><path d="M418.1 258.2L419.7 256.6M418.9 256.2V258.6" stroke="#333" stroke-width="0.6"/><path d="M460.1 258.2L461.7 256.6M460.9 256.2V258.6" stroke="#333" stroke-width="0.6"/><text x="439.6" y="255.8" font-size="5.9" fill="#333" text-anchor="middle">1400</text><text x="339.8" y="254.4" font-size="5.3" fill="#333" textLength="67.8" lengthAdjust="spacingAndGlyphs">CONCRETE FOUNDATION</text><path d="M339 256.3H408.4M408.4 256.3L418.6 247.8" stroke="#444" stroke-width="0.6" fill="none"/><polygon points="418.6,247.8 416.63,252.31 413.81,248.93" fill="#111"/><text x="555.8" y="141.2" font-size="5.3" fill="#333" textLength="66.7" lengthAdjust="spacingAndGlyphs">LIVE LOAD – ROADWAY</text><path d="M555 142.9H623.3M555 142.9L538.9 150.9" stroke="#444" stroke-width="0.6" fill="none"/><polygon points="538.9,150.9 541.86,146.97 543.82,150.91" fill="#111"/><path d="M421.8 168V238.8" stroke="#4a9df0" stroke-width="5.4" stroke-linecap="round"/><circle cx="421.8" cy="169.4" r="3.9" fill="#4a9df0"/><circle cx="421.8" cy="238.6" r="3.4" fill="#4a9df0"/><rect x="413.2" y="194.2" width="7.6" height="19.6" rx="3" fill="#4a9df0"/><text transform="translate(419.2,204) rotate(-90)" font-size="5.7" fill="#1c2c50" text-anchor="middle">2400</text><path d="M421.8 168V239.6" stroke="#2a60b0" stroke-width="0.5"/><rect x="419.1" y="167" width="5.4" height="5.4" fill="none" stroke="#e01818" stroke-width="1.25"/><rect x="429.1" y="166.8" width="5.4" height="5.4" fill="none" stroke="#e01818" stroke-width="1.25"/><rect x="419.1" y="201.3" width="5.4" height="5.4" fill="none" stroke="#e01818" stroke-width="1.25"/><rect x="419.1" y="235.7" width="5.4" height="5.4" fill="none" stroke="#e01818" stroke-width="1.25"/><rect x="425.6" y="235.7" width="5.4" height="5.4" fill="none" stroke="#e01818" stroke-width="1.25"/><text x="273.8" y="310.7" font-size="10.2" fill="#222" stroke="#222" stroke-width="0.15" textLength="128.5" lengthAdjust="spacingAndGlyphs">SECTION 2-2 - stationing 8 m</text><path d="M273.8 311.9H402.3" stroke="#222" stroke-width="0.8"/><rect x="319.4" y="301.4" width="315.4" height="157.2" stroke="#444" stroke-width="0.8" stroke-dasharray="0.9 1" fill="none"/><rect x="443" y="359.9" width="129.7" height="69.6" fill="#a59065"/><rect x="500" y="320.4" width="72.7" height="39.5" fill="#a5c47b"/><polygon points="439.8,335 484,320.4 572.7,320.4 443,429.3 437,429.3" fill="#f2e4bc"/><rect x="443" y="429.3" width="129.7" height="29.3" fill="#d1b273"/><path d="M572.7 320.4L443 429.3" stroke="#6e5e3c" stroke-width="0.6" fill="none"/><path d="M527.1 359.9H572.7M443 429.4H572.7" stroke="#8a7858" stroke-width="0.5"/><path d="M572.9 320.4V458.6M443 438.2V458.6" stroke="#c4a4ac" stroke-width="0.6"/><path d="M439.6 335.1L484 320.4H634.8" stroke="#5a4640" stroke-width="0.8" fill="none"/><path d="M497.8 301.6V319.8M496.5 316.8L497.8 319.8L499.1 316.8M504.24 301.6V319.8M502.94 316.8L504.24 319.8L505.54 316.8M510.69 301.6V319.8M509.39 316.8L510.69 319.8L511.99 316.8M517.13 301.6V319.8M515.83 316.8L517.13 319.8L518.43 316.8M523.58 301.6V319.8M522.28 316.8L523.58 319.8L524.88 316.8M530.02 301.6V319.8M528.72 316.8L530.02 319.8L531.32 316.8M536.47 301.6V319.8M535.17 316.8L536.47 319.8L537.77 316.8M542.91 301.6V319.8M541.61 316.8L542.91 319.8L544.21 316.8M549.36 301.6V319.8M548.06 316.8L549.36 319.8L550.66 316.8M555.8 301.6V319.8M554.5 316.8L555.8 319.8L557.1 316.8" stroke="#555" stroke-width="0.6" fill="none"/><path d="M497.8 301.6H555.8" stroke="#555" stroke-width="0.5"/><path d="M319.4 412.2H377.1L388 423.6H417" stroke="#444" stroke-width="1.1" fill="none"/><rect x="376.3" y="423.8" width="28.7" height="5.5" fill="#a59065" stroke="#5a4c2c" stroke-width="0.6"/><rect x="409" y="429.6" width="39.9" height="8.5" fill="#8a8a8a" stroke="#a890a8" stroke-width="0.5"/><polygon points="417.4,418.2 443.1,418.2 442.7,429 417,429" fill="#c00000" stroke="#222" stroke-width="0.7" stroke-linejoin="round"/><path d="M417.2 424.3H442.9" stroke="#300" stroke-width="0.6"/><polygon points="418,406.8 443.8,406.8 443.3,417.6 417.5,417.6" fill="#ff9000" stroke="#222" stroke-width="0.7" stroke-linejoin="round"/><text x="418.7" y="416.8" font-size="2.6" fill="#222">2</text><polygon points="418.9,395.4 444.7,395.4 444.2,406.2 418.4,406.2" fill="#ff9000" stroke="#222" stroke-width="0.7" stroke-linejoin="round"/><text x="419.6" y="405.4" font-size="2.6" fill="#222">3</text><polygon points="419.8,383.9 445.6,383.9 445.1,394.8 419.3,394.8" fill="#ff9000" stroke="#222" stroke-width="0.7" stroke-linejoin="round"/><text x="420.5" y="394" font-size="2.6" fill="#222">4</text><polygon points="420.3,372.2 437.3,372.2 436.9,383.1 419.9,383.1" fill="#ffff00" stroke="#222" stroke-width="0.7" stroke-linejoin="round"/><text x="421.1" y="382.3" font-size="2.6" fill="#222">5</text><polygon points="420.9,360.8 438.1,360.8 437.7,371.6 420.5,371.6" fill="#ffff00" stroke="#222" stroke-width="0.7" stroke-linejoin="round"/><text x="421.7" y="370.8" font-size="2.6" fill="#222">6</text><polygon points="421.7,349.4 438.7,349.4 438.3,360.2 421.3,360.2" fill="#ffff00" stroke="#222" stroke-width="0.7" stroke-linejoin="round"/><text x="422.5" y="359.4" font-size="2.6" fill="#222">7</text><polygon points="422.3,338 439.6,338 439.2,348.8 421.9,348.8" fill="#ffff00" stroke="#222" stroke-width="0.7" stroke-linejoin="round"/><text x="423.1" y="348" font-size="2.6" fill="#222">8</text><polygon points="422.9,325.7 440.2,325.7 439.8,337.4 422.5,337.4" fill="#08b408" stroke="#222" stroke-width="0.7" stroke-linejoin="round"/><text x="423.7" y="336.6" font-size="2.6" fill="#222">9</text><text x="430" y="423.2" font-size="5.4" fill="#300" text-anchor="middle">900</text><path d="M411.7 324.9V429.8" stroke="#555" stroke-width="0.6"/><path d="M410.9 326.2L412.5 324.6M410.5 325.4H412.9" stroke="#333" stroke-width="0.6"/><path d="M410.9 430.1L412.5 428.5M410.5 429.3H412.9" stroke="#333" stroke-width="0.6"/><text transform="translate(410.4,376.9) rotate(-90)" font-size="5.9" fill="#333" text-anchor="middle">3600</text><path d="M420.8 321.3H442.1" stroke="#444" stroke-width="0.6"/><path d="M420.5 322.1L422.1 320.5M421.3 320.1V322.5" stroke="#333" stroke-width="0.6"/><path d="M440.8 322.1L442.4 320.5M441.6 320.1V322.5" stroke="#333" stroke-width="0.6"/><text x="431" y="319.8" font-size="5.9" fill="#333" text-anchor="middle">600</text><path d="M406.5 446.6H450.8" stroke="#444" stroke-width="0.6"/><path d="M406.2 447.4L407.8 445.8M407 445.4V447.8" stroke="#333" stroke-width="0.6"/><path d="M449.5 447.4L451.1 445.8M450.3 445.4V447.8" stroke="#333" stroke-width="0.6"/><text x="428.4" y="445" font-size="5.9" fill="#333" text-anchor="middle">1400</text><text x="327.6" y="444.5" font-size="5.3" fill="#333" textLength="69.2" lengthAdjust="spacingAndGlyphs">CONCRETE FOUNDATION</text><path d="M326.8 446.2H397.6M397.6 446.2L407.9 439" stroke="#444" stroke-width="0.6" fill="none"/><polygon points="407.9,439 405.55,443.32 403.03,439.72" fill="#111"/><text x="547.8" y="286.6" font-size="5.3" fill="#333" textLength="66.6" lengthAdjust="spacingAndGlyphs">LIVE LOAD – ROADWAY</text><path d="M547 288.2H615.2M547 288.2L538.2 300.8" stroke="#444" stroke-width="0.6" fill="none"/><polygon points="538.2,300.8 538.92,295.93 542.52,298.45" fill="#111"/><text x="273.8" y="506.6" font-size="10.2" fill="#222" stroke="#222" stroke-width="0.15" textLength="134.1" lengthAdjust="spacingAndGlyphs">SECTION 3-3 - stationing 28 m</text><path d="M273.8 507.8H407.9" stroke="#222" stroke-width="0.8"/><rect x="309.8" y="493.4" width="339.1" height="170.7" stroke="#444" stroke-width="0.8" stroke-dasharray="0.9 1" fill="none"/><rect x="440.1" y="624" width="143.5" height="40.1" fill="#d1b273"/><rect x="440.1" y="554.9" width="143.5" height="69.3" fill="#a59065"/><rect x="500" y="514.2" width="83.6" height="40.7" fill="#a5c47b"/><polygon points="438.6,528.5 481.7,514.2 583.6,514.2 440.1,634.8 434,634.8" fill="#f2e4bc"/><path d="M583.6 514.2L440.1 634.8" stroke="#6e5e3c" stroke-width="0.6" fill="none"/><path d="M535.2 554.9H583.6M453 624.1H583.6" stroke="#8a7858" stroke-width="0.5"/><path d="M583.8 514.2V664.1M440.1 643.8V664.1" stroke="#c4a4ac" stroke-width="0.6"/><path d="M438.4 528.6L481.7 514.2H583.6" stroke="#444" stroke-width="0.8" fill="none"/><path d="M583.6 514.2H648.9" stroke="#555" stroke-width="1" fill="none"/><path d="M494.8 493.6V513.8M493.5 510.8L494.8 513.8L496.1 510.8M500.6 493.6V513.8M499.3 510.8L500.6 513.8L501.9 510.8M506.4 493.6V513.8M505.1 510.8L506.4 513.8L507.7 510.8M512.2 493.6V513.8M510.9 510.8L512.2 513.8L513.5 510.8M518 493.6V513.8M516.7 510.8L518 513.8L519.3 510.8M523.8 493.6V513.8M522.5 510.8L523.8 513.8L525.1 510.8M529.6 493.6V513.8M528.3 510.8L529.6 513.8L530.9 510.8M535.4 493.6V513.8M534.1 510.8L535.4 513.8L536.7 510.8M541.2 493.6V513.8M539.9 510.8L541.2 513.8L542.5 510.8M547 493.6V513.8M545.7 510.8L547 513.8L548.3 510.8M552.8 493.6V513.8M551.5 510.8L552.8 513.8L554.1 510.8" stroke="#8c98c8" stroke-width="0.6" fill="none"/><path d="M494.8 493.6H552.8" stroke="#8c98c8" stroke-width="0.5"/><path d="M309.8 617.9H374.8L385.9 629.2H414.3" stroke="#444" stroke-width="1.1" fill="none"/><rect x="370.4" y="629.9" width="31.9" height="5.2" fill="#a59065" stroke="#5a4c2c" stroke-width="0.6"/><rect x="405.8" y="635.4" width="40.1" height="8.4" fill="#8a8a8a" stroke="#a890a8" stroke-width="0.5"/><polygon points="414.7,623.6 440.2,623.6 439.8,635 414.3,635" fill="#c00000" stroke="#222" stroke-width="0.7" stroke-linejoin="round"/><path d="M414.5 630H440" stroke="#300" stroke-width="0.6"/><polygon points="415.4,612 441.2,612 440.7,622.8 414.9,622.8" fill="#ff9000" stroke="#222" stroke-width="0.7" stroke-linejoin="round"/><text x="416.1" y="622" font-size="2.6" fill="#222">2</text><polygon points="416.3,600.6 442.1,600.6 441.6,611.4 415.8,611.4" fill="#ff9000" stroke="#222" stroke-width="0.7" stroke-linejoin="round"/><text x="417" y="610.6" font-size="2.6" fill="#222">3</text><polygon points="417.2,589.2 442.9,589.2 442.4,600 416.7,600" fill="#ff9000" stroke="#222" stroke-width="0.7" stroke-linejoin="round"/><text x="417.9" y="599.2" font-size="2.6" fill="#222">4</text><polygon points="417.6,577.7 434.9,577.7 434.5,588.3 417.2,588.3" fill="#ffff00" stroke="#222" stroke-width="0.7" stroke-linejoin="round"/><text x="418.4" y="587.5" font-size="2.6" fill="#222">5</text><polygon points="418.5,566.3 435.5,566.3 435.1,576.9 418.1,576.9" fill="#ffff00" stroke="#222" stroke-width="0.7" stroke-linejoin="round"/><text x="419.3" y="576.1" font-size="2.6" fill="#222">6</text><polygon points="419.1,554.9 436.1,554.9 435.7,565.4 418.7,565.4" fill="#ffff00" stroke="#222" stroke-width="0.7" stroke-linejoin="round"/><text x="419.9" y="564.6" font-size="2.6" fill="#222">7</text><polygon points="420,543.5 437,543.5 436.6,554 419.6,554" fill="#ffff00" stroke="#222" stroke-width="0.7" stroke-linejoin="round"/><text x="420.8" y="553.2" font-size="2.6" fill="#222">8</text><polygon points="420.6,532 437.6,532 437.2,542.6 420.2,542.6" fill="#ffff00" stroke="#222" stroke-width="0.7" stroke-linejoin="round"/><text x="421.4" y="541.8" font-size="2.6" fill="#222">9</text><polygon points="421.4,520 438.4,520 438,531.2 421,531.2" fill="#08b408" stroke="#222" stroke-width="0.7" stroke-linejoin="round"/><text x="422.2" y="530.4" font-size="2.6" fill="#222">10</text><text x="427.2" y="629" font-size="5.4" fill="#300" text-anchor="middle">900</text><path d="M409.3 518.7V635.3" stroke="#555" stroke-width="0.6"/><path d="M408.5 520L410.1 518.4M408.1 519.2H410.5" stroke="#333" stroke-width="0.6"/><path d="M408.5 635.6L410.1 634M408.1 634.8H410.5" stroke="#333" stroke-width="0.6"/><text transform="translate(407.4,577.7) rotate(-90)" font-size="5.9" fill="#333" text-anchor="middle">4000</text><path d="M419.1 514.8H439.7" stroke="#444" stroke-width="0.6"/><path d="M418.8 515.6L420.4 514M419.6 513.6V516" stroke="#333" stroke-width="0.6"/><path d="M438.4 515.6L440 514M439.2 513.6V516" stroke="#333" stroke-width="0.6"/><text x="429.8" y="513.2" font-size="5.9" fill="#333" text-anchor="middle">600</text><path d="M404.2 653.2H447.9" stroke="#444" stroke-width="0.6"/><path d="M403.9 654L405.5 652.4M404.7 652V654.4" stroke="#333" stroke-width="0.6"/><path d="M446.6 654L448.2 652.4M447.4 652V654.4" stroke="#333" stroke-width="0.6"/><text x="426.3" y="651.1" font-size="5.9" fill="#333" text-anchor="middle">1400</text><text x="324.6" y="650.6" font-size="5.3" fill="#333" textLength="69.9" lengthAdjust="spacingAndGlyphs">CONCRETE FOUNDATION</text><path d="M323.8 652.4H395.3M395.3 652.4L405.5 644.6" stroke="#444" stroke-width="0.6" fill="none"/><polygon points="405.5,644.6 403.34,649.02 400.67,645.53" fill="#111"/><text x="547.8" y="478.6" font-size="5.3" fill="#333" textLength="67.2" lengthAdjust="spacingAndGlyphs">LIVE LOAD – ROADWAY</text><path d="M547 480.2H615.8M547 480.2L537.6 493.4" stroke="#444" stroke-width="0.6" fill="none"/><polygon points="537.6,493.4 538.36,488.54 541.94,491.09" fill="#111"/><text x="781.6" y="138.2" font-size="10.2" fill="#222" stroke="#222" stroke-width="0.15" textLength="87.3" lengthAdjust="spacingAndGlyphs">LEGEND - BLOCKS</text><path d="M781.6 139.4H868.9" stroke="#222" stroke-width="0.8"/><rect x="805.4" y="159.9" width="29.6" height="14.5" fill="#08c008" stroke="#444" stroke-width="0.5"/><rect x="805.4" y="181.4" width="29.6" height="14.8" fill="#ffff00" stroke="#444" stroke-width="0.5"/><rect x="805.4" y="203" width="29.6" height="14.8" fill="#ff9000" stroke="#444" stroke-width="0.5"/><rect x="805.4" y="224.3" width="29.6" height="14.5" fill="#c00000" stroke="#444" stroke-width="0.5"/><rect x="851.4" y="166.9" width="62.7" height="67.7" stroke="#444" stroke-width="0.8" stroke-dasharray="0.9 1" fill="none"/><text x="851.6" y="172.2" font-size="5.7" fill="#2a2a2a" textLength="46.2" lengthAdjust="spacingAndGlyphs">T60 - 400x600mm</text><text x="851.6" y="192.4" font-size="5.7" fill="#2a2a2a" textLength="46.2" lengthAdjust="spacingAndGlyphs">S60 - 400x600mm</text><text x="851.6" y="212.6" font-size="5.7" fill="#2a2a2a" textLength="46.2" lengthAdjust="spacingAndGlyphs">S90 - 400x900mm</text><text x="851.6" y="232.9" font-size="5.7" fill="#2a2a2a" textLength="46.2" lengthAdjust="spacingAndGlyphs">B90 - 400x900mm</text><rect x="931.5" y="151.5" width="33.5" height="96" stroke="#444" stroke-width="0.8" stroke-dasharray="0.9 1" fill="none"/><polygon points="933,156.2 935.4,154.6 960.2,158.2 957.4,159.8" fill="#8a8a8a" stroke="#444" stroke-width="0.4"/><polygon points="957.4,159.8 960.4,158.2 960.4,164.6 957.4,167.2" fill="#777" stroke="#444" stroke-width="0.4"/><polygon points="933,156.2 957.4,159.8 957.4,167.2 933,163.6" fill="#fff" stroke="#555" stroke-width="0.7"/><polygon points="933,183.6 937.5,179.6 960.5,180.8 957,185" fill="#8a8a8a" stroke="#444" stroke-width="0.4"/><ellipse cx="941" cy="182" rx="2" ry="1" fill="#ddd" stroke="#444" stroke-width="0.3"/><ellipse cx="952.4" cy="182.6" rx="2" ry="1" fill="#ddd" stroke="#444" stroke-width="0.3"/><ellipse cx="946.6" cy="182.3" rx="1" ry="0.6" fill="#ccc" stroke="#444" stroke-width="0.3"/><polygon points="957,185 960.5,180.8 960.5,189.6 957,194" fill="#666" stroke="#444" stroke-width="0.4"/><polygon points="933,183.6 957,185 957,194 933,192" fill="#fff" stroke="#555" stroke-width="0.7"/><polygon points="933,207.8 937.5,203.8 960.5,205 957,209.2" fill="#8a8a8a" stroke="#444" stroke-width="0.4"/><ellipse cx="941" cy="206.2" rx="2" ry="1" fill="#ddd" stroke="#444" stroke-width="0.3"/><ellipse cx="952.4" cy="206.8" rx="2" ry="1" fill="#ddd" stroke="#444" stroke-width="0.3"/><ellipse cx="946.6" cy="206.5" rx="1" ry="0.6" fill="#ccc" stroke="#444" stroke-width="0.3"/><polygon points="957,209.2 960.5,205 960.5,213.8 957,218.2" fill="#666" stroke="#444" stroke-width="0.4"/><polygon points="933,207.8 957,209.2 957,218.2 933,216.2" fill="#fff" stroke="#555" stroke-width="0.7"/><polygon points="933,233 937.5,229 960.5,230.2 957,234.4" fill="#8a8a8a" stroke="#444" stroke-width="0.4"/><ellipse cx="941" cy="231.4" rx="2" ry="1" fill="#ddd" stroke="#444" stroke-width="0.3"/><ellipse cx="952.4" cy="232" rx="2" ry="1" fill="#ddd" stroke="#444" stroke-width="0.3"/><ellipse cx="946.6" cy="231.7" rx="1" ry="0.6" fill="#ccc" stroke="#444" stroke-width="0.3"/><polygon points="957,234.4 960.5,230.2 960.5,239 957,243.4" fill="#666" stroke="#444" stroke-width="0.4"/><polygon points="933,233 957,234.4 957,243.4 933,241.4" fill="#fff" stroke="#555" stroke-width="0.7"/><text x="781.3" y="300.4" font-size="10.2" fill="#222" stroke="#222" stroke-width="0.15" textLength="40.9" lengthAdjust="spacingAndGlyphs">SCHEME</text><path d="M781.3 301.6H822.2" stroke="#222" stroke-width="0.8"/><rect x="776.3" y="318.6" width="286.5" height="50.4" stroke="#444" stroke-width="0.8" stroke-dasharray="0.9 1" fill="none"/><defs><linearGradient id="wg" x1="0" y1="324" x2="0" y2="347" gradientUnits="userSpaceOnUse"><stop offset="0" stop-color="#f8f83a"/><stop offset="0.56" stop-color="#f6ec40"/><stop offset="0.64" stop-color="#f4b448"/><stop offset="0.85" stop-color="#f29a4c"/><stop offset="0.92" stop-color="#ea6058"/><stop offset="1" stop-color="#e85060"/></linearGradient><clipPath id="wc"><polygon points="776.3,331.1 790,331.1 790,328.7 817.2,328.7 817.2,326.4 843.3,326.4 843.3,324.1 992,324.1 992,326.4 1018.7,326.4 1018.7,328.7 1048.7,328.7 1048.7,331.1 1059.4,331.1 1059.4,344.4 1018.7,344.4 1018.7,346.7 817.2,346.7 817.2,344.4 776.3,344.4"/></clipPath></defs><polygon points="776.3,331.1 790,331.1 790,328.7 817.2,328.7 817.2,326.4 843.3,326.4 843.3,324.1 992,324.1 992,326.4 1018.7,326.4 1018.7,328.7 1048.7,328.7 1048.7,331.1 1059.4,331.1 1059.4,344.4 1018.7,344.4 1018.7,346.7 817.2,346.7 817.2,344.4 776.3,344.4" fill="url(#wg)"/><rect x="776.3" y="331.1" width="13.7" height="2.3" fill="#48c048"/><rect x="790" y="328.7" width="27.2" height="2.3" fill="#48c048"/><rect x="817.2" y="326.4" width="26.1" height="2.3" fill="#48c048"/><rect x="843.3" y="324.1" width="148.7" height="2.3" fill="#48c048"/><rect x="992" y="326.4" width="26.7" height="2.3" fill="#48c048"/><rect x="1018.7" y="328.7" width="30" height="2.3" fill="#48c048"/><rect x="1048.7" y="331.1" width="10.7" height="2.3" fill="#48c048"/><rect x="776.3" y="342.2" width="40.9" height="2.2" fill="#e85860"/><rect x="1018.7" y="342.2" width="40.7" height="2.2" fill="#e85860"/><g clip-path="url(#wc)"><path d="M776 324.1H1060M776 326.4H1060M776 328.7H1060M776 331H1060M776 333.3H1060M776 335.6H1060M776 337.9H1060M776 340.2H1060M776 342.5H1060M776 344.8H1060M776 347.1H1060" stroke="#8a2e88" stroke-width="0.85" fill="none" opacity="0.75"/><path d="M776.3 324.1v2.3M782.6 324.1v2.3M788.9 324.1v2.3M795.2 324.1v2.3M801.5 324.1v2.3M807.8 324.1v2.3M814.1 324.1v2.3M820.4 324.1v2.3M826.7 324.1v2.3M833 324.1v2.3M839.3 324.1v2.3M845.6 324.1v2.3M851.9 324.1v2.3M858.2 324.1v2.3M864.5 324.1v2.3M870.8 324.1v2.3M877.1 324.1v2.3M883.4 324.1v2.3M889.7 324.1v2.3M896 324.1v2.3M902.3 324.1v2.3M908.6 324.1v2.3M914.9 324.1v2.3M921.2 324.1v2.3M927.5 324.1v2.3M933.8 324.1v2.3M940.1 324.1v2.3M946.4 324.1v2.3M952.7 324.1v2.3M959 324.1v2.3M965.3 324.1v2.3M971.6 324.1v2.3M977.9 324.1v2.3M984.2 324.1v2.3M990.5 324.1v2.3M996.8 324.1v2.3M1003.1 324.1v2.3M1009.4 324.1v2.3M1015.7 324.1v2.3M1022 324.1v2.3M1028.3 324.1v2.3M1034.6 324.1v2.3M1040.9 324.1v2.3M1047.2 324.1v2.3M1053.5 324.1v2.3M1059.8 324.1v2.3M779.45 326.4v2.3M785.75 326.4v2.3M792.05 326.4v2.3M798.35 326.4v2.3M804.65 326.4v2.3M810.95 326.4v2.3M817.25 326.4v2.3M823.55 326.4v2.3M829.85 326.4v2.3M836.15 326.4v2.3M842.45 326.4v2.3M848.75 326.4v2.3M855.05 326.4v2.3M861.35 326.4v2.3M867.65 326.4v2.3M873.95 326.4v2.3M880.25 326.4v2.3M886.55 326.4v2.3M892.85 326.4v2.3M899.15 326.4v2.3M905.45 326.4v2.3M911.75 326.4v2.3M918.05 326.4v2.3M924.35 326.4v2.3M930.65 326.4v2.3M936.95 326.4v2.3M943.25 326.4v2.3M949.55 326.4v2.3M955.85 326.4v2.3M962.15 326.4v2.3M968.45 326.4v2.3M974.75 326.4v2.3M981.05 326.4v2.3M987.35 326.4v2.3M993.65 326.4v2.3M999.95 326.4v2.3M1006.25 326.4v2.3M1012.55 326.4v2.3M1018.85 326.4v2.3M1025.15 326.4v2.3M1031.45 326.4v2.3M1037.75 326.4v2.3M1044.05 326.4v2.3M1050.35 326.4v2.3M1056.65 326.4v2.3M776.3 328.7v2.3M782.6 328.7v2.3M788.9 328.7v2.3M795.2 328.7v2.3M801.5 328.7v2.3M807.8 328.7v2.3M814.1 328.7v2.3M820.4 328.7v2.3M826.7 328.7v2.3M833 328.7v2.3M839.3 328.7v2.3M845.6 328.7v2.3M851.9 328.7v2.3M858.2 328.7v2.3M864.5 328.7v2.3M870.8 328.7v2.3M877.1 328.7v2.3M883.4 328.7v2.3M889.7 328.7v2.3M896 328.7v2.3M902.3 328.7v2.3M908.6 328.7v2.3M914.9 328.7v2.3M921.2 328.7v2.3M927.5 328.7v2.3M933.8 328.7v2.3M940.1 328.7v2.3M946.4 328.7v2.3M952.7 328.7v2.3M959 328.7v2.3M965.3 328.7v2.3M971.6 328.7v2.3M977.9 328.7v2.3M984.2 328.7v2.3M990.5 328.7v2.3M996.8 328.7v2.3M1003.1 328.7v2.3M1009.4 328.7v2.3M1015.7 328.7v2.3M1022 328.7v2.3M1028.3 328.7v2.3M1034.6 328.7v2.3M1040.9 328.7v2.3M1047.2 328.7v2.3M1053.5 328.7v2.3M1059.8 328.7v2.3M779.45 331v2.3M785.75 331v2.3M792.05 331v2.3M798.35 331v2.3M804.65 331v2.3M810.95 331v2.3M817.25 331v2.3M823.55 331v2.3M829.85 331v2.3M836.15 331v2.3M842.45 331v2.3M848.75 331v2.3M855.05 331v2.3M861.35 331v2.3M867.65 331v2.3M873.95 331v2.3M880.25 331v2.3M886.55 331v2.3M892.85 331v2.3M899.15 331v2.3M905.45 331v2.3M911.75 331v2.3M918.05 331v2.3M924.35 331v2.3M930.65 331v2.3M936.95 331v2.3M943.25 331v2.3M949.55 331v2.3M955.85 331v2.3M962.15 331v2.3M968.45 331v2.3M974.75 331v2.3M981.05 331v2.3M987.35 331v2.3M993.65 331v2.3M999.95 331v2.3M1006.25 331v2.3M1012.55 331v2.3M1018.85 331v2.3M1025.15 331v2.3M1031.45 331v2.3M1037.75 331v2.3M1044.05 331v2.3M1050.35 331v2.3M1056.65 331v2.3M776.3 333.3v2.3M782.6 333.3v2.3M788.9 333.3v2.3M795.2 333.3v2.3M801.5 333.3v2.3M807.8 333.3v2.3M814.1 333.3v2.3M820.4 333.3v2.3M826.7 333.3v2.3M833 333.3v2.3M839.3 333.3v2.3M845.6 333.3v2.3M851.9 333.3v2.3M858.2 333.3v2.3M864.5 333.3v2.3M870.8 333.3v2.3M877.1 333.3v2.3M883.4 333.3v2.3M889.7 333.3v2.3M896 333.3v2.3M902.3 333.3v2.3M908.6 333.3v2.3M914.9 333.3v2.3M921.2 333.3v2.3M927.5 333.3v2.3M933.8 333.3v2.3M940.1 333.3v2.3M946.4 333.3v2.3M952.7 333.3v2.3M959 333.3v2.3M965.3 333.3v2.3M971.6 333.3v2.3M977.9 333.3v2.3M984.2 333.3v2.3M990.5 333.3v2.3M996.8 333.3v2.3M1003.1 333.3v2.3M1009.4 333.3v2.3M1015.7 333.3v2.3M1022 333.3v2.3M1028.3 333.3v2.3M1034.6 333.3v2.3M1040.9 333.3v2.3M1047.2 333.3v2.3M1053.5 333.3v2.3M1059.8 333.3v2.3M779.45 335.6v2.3M785.75 335.6v2.3M792.05 335.6v2.3M798.35 335.6v2.3M804.65 335.6v2.3M810.95 335.6v2.3M817.25 335.6v2.3M823.55 335.6v2.3M829.85 335.6v2.3M836.15 335.6v2.3M842.45 335.6v2.3M848.75 335.6v2.3M855.05 335.6v2.3M861.35 335.6v2.3M867.65 335.6v2.3M873.95 335.6v2.3M880.25 335.6v2.3M886.55 335.6v2.3M892.85 335.6v2.3M899.15 335.6v2.3M905.45 335.6v2.3M911.75 335.6v2.3M918.05 335.6v2.3M924.35 335.6v2.3M930.65 335.6v2.3M936.95 335.6v2.3M943.25 335.6v2.3M949.55 335.6v2.3M955.85 335.6v2.3M962.15 335.6v2.3M968.45 335.6v2.3M974.75 335.6v2.3M981.05 335.6v2.3M987.35 335.6v2.3M993.65 335.6v2.3M999.95 335.6v2.3M1006.25 335.6v2.3M1012.55 335.6v2.3M1018.85 335.6v2.3M1025.15 335.6v2.3M1031.45 335.6v2.3M1037.75 335.6v2.3M1044.05 335.6v2.3M1050.35 335.6v2.3M1056.65 335.6v2.3M776.3 337.9v2.3M782.6 337.9v2.3M788.9 337.9v2.3M795.2 337.9v2.3M801.5 337.9v2.3M807.8 337.9v2.3M814.1 337.9v2.3M820.4 337.9v2.3M826.7 337.9v2.3M833 337.9v2.3M839.3 337.9v2.3M845.6 337.9v2.3M851.9 337.9v2.3M858.2 337.9v2.3M864.5 337.9v2.3M870.8 337.9v2.3M877.1 337.9v2.3M883.4 337.9v2.3M889.7 337.9v2.3M896 337.9v2.3M902.3 337.9v2.3M908.6 337.9v2.3M914.9 337.9v2.3M921.2 337.9v2.3M927.5 337.9v2.3M933.8 337.9v2.3M940.1 337.9v2.3M946.4 337.9v2.3M952.7 337.9v2.3M959 337.9v2.3M965.3 337.9v2.3M971.6 337.9v2.3M977.9 337.9v2.3M984.2 337.9v2.3M990.5 337.9v2.3M996.8 337.9v2.3M1003.1 337.9v2.3M1009.4 337.9v2.3M1015.7 337.9v2.3M1022 337.9v2.3M1028.3 337.9v2.3M1034.6 337.9v2.3M1040.9 337.9v2.3M1047.2 337.9v2.3M1053.5 337.9v2.3M1059.8 337.9v2.3M779.45 340.2v2.3M785.75 340.2v2.3M792.05 340.2v2.3M798.35 340.2v2.3M804.65 340.2v2.3M810.95 340.2v2.3M817.25 340.2v2.3M823.55 340.2v2.3M829.85 340.2v2.3M836.15 340.2v2.3M842.45 340.2v2.3M848.75 340.2v2.3M855.05 340.2v2.3M861.35 340.2v2.3M867.65 340.2v2.3M873.95 340.2v2.3M880.25 340.2v2.3M886.55 340.2v2.3M892.85 340.2v2.3M899.15 340.2v2.3M905.45 340.2v2.3M911.75 340.2v2.3M918.05 340.2v2.3M924.35 340.2v2.3M930.65 340.2v2.3M936.95 340.2v2.3M943.25 340.2v2.3M949.55 340.2v2.3M955.85 340.2v2.3M962.15 340.2v2.3M968.45 340.2v2.3M974.75 340.2v2.3M981.05 340.2v2.3M987.35 340.2v2.3M993.65 340.2v2.3M999.95 340.2v2.3M1006.25 340.2v2.3M1012.55 340.2v2.3M1018.85 340.2v2.3M1025.15 340.2v2.3M1031.45 340.2v2.3M1037.75 340.2v2.3M1044.05 340.2v2.3M1050.35 340.2v2.3M1056.65 340.2v2.3M776.3 342.5v2.3M782.6 342.5v2.3M788.9 342.5v2.3M795.2 342.5v2.3M801.5 342.5v2.3M807.8 342.5v2.3M814.1 342.5v2.3M820.4 342.5v2.3M826.7 342.5v2.3M833 342.5v2.3M839.3 342.5v2.3M845.6 342.5v2.3M851.9 342.5v2.3M858.2 342.5v2.3M864.5 342.5v2.3M870.8 342.5v2.3M877.1 342.5v2.3M883.4 342.5v2.3M889.7 342.5v2.3M896 342.5v2.3M902.3 342.5v2.3M908.6 342.5v2.3M914.9 342.5v2.3M921.2 342.5v2.3M927.5 342.5v2.3M933.8 342.5v2.3M940.1 342.5v2.3M946.4 342.5v2.3M952.7 342.5v2.3M959 342.5v2.3M965.3 342.5v2.3M971.6 342.5v2.3M977.9 342.5v2.3M984.2 342.5v2.3M990.5 342.5v2.3M996.8 342.5v2.3M1003.1 342.5v2.3M1009.4 342.5v2.3M1015.7 342.5v2.3M1022 342.5v2.3M1028.3 342.5v2.3M1034.6 342.5v2.3M1040.9 342.5v2.3M1047.2 342.5v2.3M1053.5 342.5v2.3M1059.8 342.5v2.3M779.45 344.8v2.3M785.75 344.8v2.3M792.05 344.8v2.3M798.35 344.8v2.3M804.65 344.8v2.3M810.95 344.8v2.3M817.25 344.8v2.3M823.55 344.8v2.3M829.85 344.8v2.3M836.15 344.8v2.3M842.45 344.8v2.3M848.75 344.8v2.3M855.05 344.8v2.3M861.35 344.8v2.3M867.65 344.8v2.3M873.95 344.8v2.3M880.25 344.8v2.3M886.55 344.8v2.3M892.85 344.8v2.3M899.15 344.8v2.3M905.45 344.8v2.3M911.75 344.8v2.3M918.05 344.8v2.3M924.35 344.8v2.3M930.65 344.8v2.3M936.95 344.8v2.3M943.25 344.8v2.3M949.55 344.8v2.3M955.85 344.8v2.3M962.15 344.8v2.3M968.45 344.8v2.3M974.75 344.8v2.3M981.05 344.8v2.3M987.35 344.8v2.3M993.65 344.8v2.3M999.95 344.8v2.3M1006.25 344.8v2.3M1012.55 344.8v2.3M1018.85 344.8v2.3M1025.15 344.8v2.3M1031.45 344.8v2.3M1037.75 344.8v2.3M1044.05 344.8v2.3M1050.35 344.8v2.3M1056.65 344.8v2.3" stroke="#8a2e88" stroke-width="1.3" fill="none" opacity="0.7"/></g><polygon points="776.3,331.1 790,331.1 790,328.7 817.2,328.7 817.2,326.4 843.3,326.4 843.3,324.1 992,324.1 992,326.4 1018.7,326.4 1018.7,328.7 1048.7,328.7 1048.7,331.1 1059.4,331.1 1059.4,344.4 1018.7,344.4 1018.7,346.7 817.2,346.7 817.2,344.4 776.3,344.4" fill="none" stroke="#8a2a86" stroke-width="0.7"/><path d="M776.3 368.5H1062M776.3 364.6V368.5M793.1 364.6V368.5M809.9 364.6V368.5M826.7 364.6V368.5M843.5 364.6V368.5M860.3 364.6V368.5M877.1 364.6V368.5M893.9 364.6V368.5M910.7 364.6V368.5M927.5 364.6V368.5M944.3 364.6V368.5M961.1 364.6V368.5M977.9 364.6V368.5M994.7 364.6V368.5M1011.5 364.6V368.5M1028.3 364.6V368.5M1045.1 364.6V368.5M1061.9 364.6V368.5" stroke="#555" stroke-width="0.6" fill="none"/><text transform="translate(777.7,359.6) rotate(-90)" font-size="3.9" fill="#444" text-anchor="middle">0,00</text><text transform="translate(794.5,359.6) rotate(-90)" font-size="3.9" fill="#444" text-anchor="middle">3,00</text><text transform="translate(811.3,359.6) rotate(-90)" font-size="3.9" fill="#444" text-anchor="middle">6,00</text><text transform="translate(828.1,359.6) rotate(-90)" font-size="3.9" fill="#444" text-anchor="middle">9,00</text><text transform="translate(844.9,359.6) rotate(-90)" font-size="3.9" fill="#444" text-anchor="middle">12,00</text><text transform="translate(861.7,359.6) rotate(-90)" font-size="3.9" fill="#444" text-anchor="middle">15,00</text><text transform="translate(878.5,359.6) rotate(-90)" font-size="3.9" fill="#444" text-anchor="middle">18,00</text><text transform="translate(895.3,359.6) rotate(-90)" font-size="3.9" fill="#444" text-anchor="middle">21,00</text><text transform="translate(912.1,359.6) rotate(-90)" font-size="3.9" fill="#444" text-anchor="middle">24,00</text><text transform="translate(928.9,359.6) rotate(-90)" font-size="3.9" fill="#444" text-anchor="middle">27,00</text><text transform="translate(945.7,359.6) rotate(-90)" font-size="3.9" fill="#444" text-anchor="middle">30,00</text><text transform="translate(962.5,359.6) rotate(-90)" font-size="3.9" fill="#444" text-anchor="middle">33,00</text><text transform="translate(979.3,359.6) rotate(-90)" font-size="3.9" fill="#444" text-anchor="middle">36,00</text><text transform="translate(996.1,359.6) rotate(-90)" font-size="3.9" fill="#444" text-anchor="middle">39,00</text><text transform="translate(1012.9,359.6) rotate(-90)" font-size="3.9" fill="#444" text-anchor="middle">42,00</text><text transform="translate(1029.7,359.6) rotate(-90)" font-size="3.9" fill="#444" text-anchor="middle">45,00</text><text transform="translate(1046.5,359.6) rotate(-90)" font-size="3.9" fill="#444" text-anchor="middle">48,00</text><text transform="translate(1063.3,359.6) rotate(-90)" font-size="3.9" fill="#444" text-anchor="middle">51,00</text><rect x="783.3" y="342.1" width="4.6" height="2.3" fill="#c00000" stroke="#b0208a" stroke-width="0.45"/><rect x="783.3" y="339.8" width="4.6" height="2.3" fill="#ff9000" stroke="#b0208a" stroke-width="0.45"/><rect x="783.3" y="337.5" width="4.6" height="2.3" fill="#ff9000" stroke="#b0208a" stroke-width="0.45"/><rect x="783.3" y="335.2" width="3.2" height="2.3" fill="#ffe000" stroke="#b0208a" stroke-width="0.45"/><rect x="783.3" y="332.9" width="3.2" height="2.3" fill="#ffe000" stroke="#b0208a" stroke-width="0.45"/><rect x="783.3" y="330.6" width="3.2" height="2.3" fill="#08c008" stroke="#b0208a" stroke-width="0.45"/><path d="M788.7 331.1V343.9" stroke="#c02890" stroke-width="0.6"/><path d="M782.3 328.4V347.3" stroke="#10108a" stroke-width="0.7"/><circle cx="782.3" cy="328.4" r="2.35" fill="#000078"/><circle cx="782.3" cy="347.3" r="2.35" fill="#000078"/><rect x="822.5" y="344.4" width="4.6" height="2.3" fill="#c00000" stroke="#b0208a" stroke-width="0.45"/><rect x="822.5" y="342.1" width="4.6" height="2.3" fill="#ff9000" stroke="#b0208a" stroke-width="0.45"/><rect x="822.5" y="339.8" width="4.6" height="2.3" fill="#ff9000" stroke="#b0208a" stroke-width="0.45"/><rect x="822.5" y="337.5" width="4.6" height="2.3" fill="#ff9000" stroke="#b0208a" stroke-width="0.45"/><rect x="822.5" y="335.2" width="3.2" height="2.3" fill="#ffe000" stroke="#b0208a" stroke-width="0.45"/><rect x="822.5" y="332.9" width="3.2" height="2.3" fill="#ffe000" stroke="#b0208a" stroke-width="0.45"/><rect x="822.5" y="330.6" width="3.2" height="2.3" fill="#ffe000" stroke="#b0208a" stroke-width="0.45"/><rect x="822.5" y="328.3" width="3.2" height="2.3" fill="#ffe000" stroke="#b0208a" stroke-width="0.45"/><rect x="822.5" y="326" width="3.2" height="2.3" fill="#08c008" stroke="#b0208a" stroke-width="0.45"/><path d="M827.9 326.5V346.2" stroke="#c02890" stroke-width="0.6"/><path d="M821.5 322.4V351" stroke="#10108a" stroke-width="0.7"/><circle cx="821.5" cy="322.4" r="2.35" fill="#000078"/><circle cx="821.5" cy="351" r="2.35" fill="#000078"/><rect x="934.4" y="344.4" width="4.6" height="2.3" fill="#c00000" stroke="#b0208a" stroke-width="0.45"/><rect x="934.4" y="342.1" width="4.6" height="2.3" fill="#ff9000" stroke="#b0208a" stroke-width="0.45"/><rect x="934.4" y="339.8" width="4.6" height="2.3" fill="#ff9000" stroke="#b0208a" stroke-width="0.45"/><rect x="934.4" y="337.5" width="4.6" height="2.3" fill="#ff9000" stroke="#b0208a" stroke-width="0.45"/><rect x="934.4" y="335.2" width="3.2" height="2.3" fill="#ffe000" stroke="#b0208a" stroke-width="0.45"/><rect x="934.4" y="332.9" width="3.2" height="2.3" fill="#ffe000" stroke="#b0208a" stroke-width="0.45"/><rect x="934.4" y="330.6" width="3.2" height="2.3" fill="#ffe000" stroke="#b0208a" stroke-width="0.45"/><rect x="934.4" y="328.3" width="3.2" height="2.3" fill="#ffe000" stroke="#b0208a" stroke-width="0.45"/><rect x="934.4" y="326" width="3.2" height="2.3" fill="#ffe000" stroke="#b0208a" stroke-width="0.45"/><rect x="934.4" y="323.7" width="3.2" height="2.3" fill="#08c008" stroke="#b0208a" stroke-width="0.45"/><path d="M939.8 324.2V346.2" stroke="#c02890" stroke-width="0.6"/><path d="M933.4 319.7V350.9" stroke="#10108a" stroke-width="0.7"/><circle cx="933.4" cy="319.7" r="2.35" fill="#000078"/><circle cx="933.4" cy="350.9" r="2.35" fill="#000078"/><rect x="784.2" y="344.0" width="33.2" height="3.6" fill="#c4c4ee" opacity="0.55"/><text x="784.6" y="347.2" font-size="4.2" fill="#2020a0" stroke="#2020a0" stroke-width="0.12" textLength="32.4" lengthAdjust="spacingAndGlyphs">Section No. 1 (1,00m)</text><path d="M784.6 348.0H817" stroke="#2424a8" stroke-width="0.4"/><rect x="823.4" y="347.40000000000003" width="38.5" height="3.6" fill="#c4c4ee" opacity="0.55"/><text x="823.8" y="350.6" font-size="4.2" fill="#2020a0" stroke="#2020a0" stroke-width="0.12" textLength="37.7" lengthAdjust="spacingAndGlyphs">Section No. 2 (8,00m)</text><path d="M823.8 351.40000000000003H861.5" stroke="#2424a8" stroke-width="0.4"/><rect x="935.5" y="347.6" width="40.9" height="3.6" fill="#c4c4ee" opacity="0.55"/><text x="935.9" y="350.8" font-size="4.2" fill="#2020a0" stroke="#2020a0" stroke-width="0.12" textLength="40.1" lengthAdjust="spacingAndGlyphs">Section No. 3 (28,00m)</text><path d="M935.9 351.6H976" stroke="#2424a8" stroke-width="0.4"/><rect x="779.4" y="391.6" width="285.3" height="67.7" stroke="#444" stroke-width="0.8" stroke-dasharray="0.9 1" fill="none"/><defs><linearGradient id="vg" x1="788" y1="0" x2="1057" y2="0" gradientUnits="userSpaceOnUse"><stop offset="0" stop-color="#e2e2e2"/><stop offset="0.3" stop-color="#dedede"/><stop offset="0.65" stop-color="#dcdcdc"/><stop offset="0.85" stop-color="#d2d2d2"/><stop offset="1" stop-color="#c8c8c8"/></linearGradient><clipPath id="vc"><polygon points="788.2,413.3 801.4,414.6 801.4,412.7 828.3,416.8 828.3,414.9 857.9,419.8 857.9,417.1 884.8,420.4 925,422.6 945,421.8 969.4,419.3 996.9,413.3 1018.8,406.7 1038.6,400.6 1051.8,395.7 1056.7,395.4 1056.7,408.6 1048,414.6 1038.4,420.2 1037.4,421.2 1018.8,434.1 996.9,442.9 969.4,447.8 945,450.4 925,451.7 884.8,448.9 862.8,445.1 829.4,439.6 828.8,436.3 810,432.8 788.2,428.8"/></clipPath><filter id="vb" x="-5%" y="-20%" width="110%" height="140%"><feGaussianBlur stdDeviation="0.45"/></filter></defs><g filter="url(#vb)"><polygon points="788.2,413.3 801.4,414.6 801.4,412.7 828.3,416.8 828.3,414.9 857.9,419.8 857.9,417.1 884.8,420.4 925,422.6 945,421.8 969.4,419.3 996.9,413.3 1018.8,406.7 1038.6,400.6 1051.8,395.7 1056.7,395.4 1056.7,408.6 1048,414.6 1038.4,420.2 1037.4,421.2 1018.8,434.1 996.9,442.9 969.4,447.8 945,450.4 925,451.7 884.8,448.9 862.8,445.1 829.4,439.6 828.8,436.3 810,432.8 788.2,428.8" fill="url(#vg)"/><g clip-path="url(#vc)"><path d="M788.2 414.58 L801.4 415.36 L828.3 418 L857.9 420.98 L884.8 423.25 L925 425.51 L945 424.66 L969.4 422.15 L996.9 416.26 L1018.8 409.44 L1038.6 402.56 L1056.7 396.72M788.2 416.16 L801.4 417.12 L828.3 420.2 L857.9 423.56 L884.8 426.1 L925 428.42 L945 427.52 L969.4 425 L996.9 419.22 L1018.8 412.18 L1038.6 404.52 L1056.7 398.04M788.2 417.74 L801.4 418.88 L828.3 422.4 L857.9 426.14 L884.8 428.95 L925 431.33 L945 430.38 L969.4 427.85 L996.9 422.18 L1018.8 414.92 L1038.6 406.48 L1056.7 399.36M788.2 419.32 L801.4 420.64 L828.3 424.6 L857.9 428.72 L884.8 431.8 L925 434.24 L945 433.24 L969.4 430.7 L996.9 425.14 L1018.8 417.66 L1038.6 408.44 L1056.7 400.68M788.2 420.9 L801.4 422.4 L828.3 426.8 L857.9 431.3 L884.8 434.65 L925 437.15 L945 436.1 L969.4 433.55 L996.9 428.1 L1018.8 420.4 L1038.6 410.4 L1056.7 402M788.2 422.48 L801.4 424.16 L828.3 429 L857.9 433.88 L884.8 437.5 L925 440.06 L945 438.96 L969.4 436.4 L996.9 431.06 L1018.8 423.14 L1038.6 412.36 L1056.7 403.32M788.2 424.06 L801.4 425.92 L828.3 431.2 L857.9 436.46 L884.8 440.35 L925 442.97 L945 441.82 L969.4 439.25 L996.9 434.02 L1018.8 425.88 L1038.6 414.32 L1056.7 404.64M788.2 425.64 L801.4 427.68 L828.3 433.4 L857.9 439.04 L884.8 443.2 L925 445.88 L945 444.68 L969.4 442.1 L996.9 436.98 L1018.8 428.62 L1038.6 416.28 L1056.7 405.96M788.2 427.22 L801.4 429.44 L828.3 435.6 L857.9 441.62 L884.8 446.05 L925 448.79 L945 447.54 L969.4 444.95 L996.9 439.94 L1018.8 431.36 L1038.6 418.24 L1056.7 407.28" stroke="#fbfbfb" stroke-width="0.7" fill="none" opacity="0.65"/><path d="M789.1 414.6L788.1 416.19M789.1 417.77L788.1 419.36M789.1 420.95L788.1 422.53M789.1 424.12L788.1 425.7M789.1 427.29L788.1 428.87M791.7 413.14L790.7 414.76M794.3 414.91L793.3 416.57M791.7 416.38L790.7 418M794.3 418.22L793.3 419.88M791.7 419.62L790.7 421.24M794.3 421.54L793.3 423.19M791.7 422.86L790.7 424.48M794.3 424.85L793.3 426.51M791.7 426.1L790.7 427.72M794.3 428.16L793.3 429.82M796.9 413.37L795.9 415.06M799.5 415.22L798.5 416.95M796.9 416.76L795.9 418.45M799.5 418.67L798.5 420.4M796.9 420.14L795.9 421.83M799.5 422.13L798.5 423.85M796.9 423.52L795.9 425.22M799.5 425.58L798.5 427.31M796.9 426.91L795.9 428.6M799.5 429.04L798.5 430.76M802.1 413.62L801.1 415.38M804.7 415.63L803.7 417.44M802.1 417.14L801.1 418.91M804.7 419.25L803.7 421.05M802.1 420.67L801.1 422.43M804.7 422.86L803.7 424.66M802.1 424.2L801.1 425.96M804.7 426.47L803.7 428.28M802.1 427.72L801.1 429.49M804.7 430.08L803.7 431.89M807.3 414.04L806.3 415.89M809.9 416.15L808.9 418.04M807.3 417.74L806.3 419.59M809.9 419.93L808.9 421.82M807.3 421.43L806.3 423.28M809.9 423.71L808.9 425.6M807.3 425.13L806.3 426.98M809.9 427.49L808.9 429.38M807.3 428.83L806.3 430.68M809.9 431.27L808.9 433.16M812.5 414.47L811.5 416.4M815.1 416.66L814.1 418.63M812.5 418.33L811.5 420.27M815.1 420.61L814.1 422.58M812.5 422.2L811.5 424.13M815.1 424.56L814.1 426.54M812.5 426.07L811.5 428M815.1 428.51L814.1 430.49M812.5 429.93L811.5 431.87M815.1 432.46L814.1 434.44M817.7 414.89L816.7 416.91M820.3 417.17L819.3 419.23M817.7 418.93L816.7 420.95M820.3 421.29L819.3 423.35M817.7 422.97L816.7 424.98M820.3 425.41L819.3 427.47M817.7 427L816.7 429.02M820.3 429.53L819.3 431.59M817.7 431.04L816.7 433.06M820.3 433.65L819.3 435.71M822.9 415.32L821.9 417.42M825.5 417.68L824.5 419.82M822.9 419.52L821.9 421.63M825.5 421.97L824.5 424.11M822.9 423.73L821.9 425.83M825.5 426.26L824.5 428.41M822.9 427.94L821.9 430.04M825.5 430.55L824.5 432.7M822.9 432.15L821.9 434.25M825.5 434.84L824.5 436.99M828.1 415.74L827.1 417.93M830.7 418.19L829.7 420.42M828.1 420.12L827.1 422.31M830.7 422.64L829.7 424.86M828.1 424.5L827.1 426.69M830.7 427.09L829.7 429.31M828.1 428.87L827.1 431.06M830.7 431.54L829.7 433.76M828.1 433.25L827.1 435.44M830.7 435.99L829.7 438.21M833.3 416.2L832.3 418.45M835.9 418.71L834.9 421.01M833.3 420.71L832.3 422.97M835.9 423.3L834.9 425.59M833.3 425.23L832.3 427.48M835.9 427.88L834.9 430.17M833.3 429.74L832.3 432M835.9 432.46L834.9 434.75M833.3 434.26L832.3 436.52M835.9 437.04L834.9 439.34M838.5 416.65L837.5 418.98M841.1 419.24L840.1 421.6M838.5 421.3L837.5 423.63M841.1 423.95L840.1 426.31M838.5 425.95L837.5 428.27M841.1 428.67L840.1 431.03M838.5 430.6L837.5 432.92M841.1 433.39L840.1 435.74M838.5 435.25L837.5 437.57M841.1 438.1L840.1 440.46M843.7 417.11L842.7 419.5M846.3 419.76L845.3 422.19M843.7 421.89L842.7 424.28M846.3 424.61L845.3 427.04M843.7 426.67L842.7 429.07M846.3 429.46L845.3 431.89M843.7 431.46L842.7 433.85M846.3 434.31L845.3 436.73M843.7 436.24L842.7 438.63M846.3 439.16L845.3 441.58M848.9 417.57L847.9 420.02M851.5 420.29L850.5 422.78M848.9 422.48L847.9 424.94M851.5 425.27L850.5 427.76M848.9 427.4L847.9 429.86M851.5 430.25L850.5 432.74M848.9 432.31L847.9 434.77M851.5 435.23L850.5 437.73M848.9 437.23L847.9 439.69M851.5 440.22L850.5 442.71M854.1 418.02L853.1 420.55M856.7 420.81L855.7 423.37M854.1 423.07L853.1 425.6M856.7 425.93L855.7 428.48M854.1 428.12L853.1 430.65M856.7 431.04L855.7 433.6M854.1 433.17L853.1 435.7M856.7 436.16L855.7 438.72M854.1 438.22L853.1 440.75M856.7 441.27L855.7 443.83M859.3 418.47L858.3 421.06M861.9 421.28L860.9 423.89M859.3 423.64L858.3 426.23M861.9 426.51L860.9 429.12M859.3 428.82L858.3 431.41M861.9 431.74L860.9 434.35M859.3 434L858.3 436.59M861.9 436.97L860.9 439.58M859.3 439.18L858.3 441.77M861.9 442.2L860.9 444.81M864.5 418.85L863.5 421.49M867.1 421.71L866.1 424.38M864.5 424.14L863.5 426.78M867.1 427.05L866.1 429.72M864.5 429.42L863.5 432.06M867.1 432.38L866.1 435.05M864.5 434.7L863.5 437.34M867.1 437.72L866.1 440.39M864.5 439.98L863.5 442.62M867.1 443.05L866.1 445.72M869.7 419.24L868.7 421.93M872.3 422.15L871.3 424.87M869.7 424.63L868.7 427.32M872.3 427.59L871.3 430.31M869.7 430.01L868.7 432.71M872.3 433.03L871.3 435.75M869.7 435.4L868.7 438.09M872.3 438.47L871.3 441.19M869.7 440.79L868.7 443.48M872.3 443.91L871.3 446.63M874.9 419.63L873.9 422.37M877.5 422.59L876.5 425.36M874.9 425.12L873.9 427.86M877.5 428.14L876.5 430.91M874.9 430.61L873.9 433.35M877.5 433.68L876.5 436.45M874.9 436.1L873.9 438.85M877.5 439.22L876.5 441.99M874.9 441.59L873.9 444.34M877.5 444.77L876.5 447.54M880.1 420.01L879.1 422.81M882.7 423.03L881.7 425.85M880.1 425.61L879.1 428.41M882.7 428.68L881.7 431.5M880.1 431.2L879.1 434M882.7 434.33L881.7 437.15M880.1 436.8L879.1 439.6M882.7 439.97L881.7 442.8M880.1 442.4L879.1 445.19M882.7 445.62L881.7 448.45M885.3 420.4L884.3 423.25M887.9 423.4L886.9 426.25M885.3 426.1L884.3 428.95M887.9 429.1L886.9 431.96M885.3 431.8L884.3 434.65M887.9 434.81L886.9 437.67M885.3 437.5L884.3 440.35M887.9 440.52L886.9 443.37M885.3 443.2L884.3 446.05M887.9 446.23L886.9 449.08M890.5 420.68L889.5 423.54M893.1 423.69L892.1 426.55M890.5 426.4L889.5 429.26M893.1 429.41L892.1 432.27M890.5 432.12L889.5 434.97M893.1 435.14L892.1 438M890.5 437.83L889.5 440.69M893.1 440.86L892.1 443.72M890.5 443.55L889.5 446.4M893.1 446.58L892.1 449.44M895.7 420.97L894.7 423.83M898.3 423.98L897.3 426.85M895.7 426.7L894.7 429.57M898.3 429.72L897.3 432.59M895.7 432.43L894.7 435.3M898.3 435.46L897.3 438.33M895.7 438.16L894.7 441.03M898.3 441.2L897.3 444.07M895.7 443.89L894.7 446.76M898.3 446.94L897.3 449.81M900.9 421.25L899.9 424.13M903.5 424.27L902.5 427.15M900.9 427L899.9 429.87M903.5 430.03L902.5 432.9M900.9 432.75L899.9 435.62M903.5 435.78L902.5 438.66M900.9 438.49L899.9 441.37M903.5 441.54L902.5 444.41M900.9 444.24L899.9 447.11M903.5 447.29L902.5 450.17M906.1 421.54L905.1 424.42M908.7 424.57L907.7 427.45M906.1 427.3L905.1 430.18M908.7 430.34L907.7 433.22M906.1 433.06L905.1 435.94M908.7 436.11L907.7 438.99M906.1 438.82L905.1 441.71M908.7 441.88L907.7 444.76M906.1 444.59L905.1 447.47M908.7 447.64L907.7 450.53M911.3 421.82L910.3 424.71M913.9 424.86L912.9 427.75M911.3 427.6L910.3 430.49M913.9 430.64L912.9 433.54M911.3 433.38L910.3 436.27M913.9 436.43L912.9 439.32M911.3 439.16L910.3 442.04M913.9 442.21L912.9 445.11M911.3 444.93L910.3 447.82M913.9 448L912.9 450.89M916.5 422.11L915.5 425M919.1 425.15L918.1 428.05M916.5 427.9L915.5 430.8M919.1 430.95L918.1 433.85M916.5 433.69L915.5 436.59M919.1 436.75L918.1 439.65M916.5 439.49L915.5 442.38M919.1 442.55L918.1 445.45M916.5 445.28L915.5 448.18M919.1 448.35L918.1 451.25M921.7 422.39L920.7 425.3M924.3 425.44L923.3 428.35M921.7 428.2L920.7 431.11M924.3 431.26L923.3 434.17M921.7 434.01L920.7 436.91M924.3 437.08L923.3 439.98M921.7 439.82L920.7 442.72M924.3 442.89L923.3 445.8M921.7 445.63L920.7 448.53M924.3 448.71L923.3 451.62M926.9 422.54L925.9 425.45M929.5 425.34L928.5 428.24M926.9 428.36L925.9 431.26M929.5 431.14L928.5 434.04M926.9 434.17L925.9 437.08M929.5 436.94L928.5 439.84M926.9 439.98L925.9 442.89M929.5 442.74L928.5 445.64M926.9 445.8L925.9 448.7M929.5 448.54L928.5 451.44M932.1 422.34L931.1 425.23M934.7 425.12L933.7 428.01M932.1 428.12L931.1 431.02M934.7 430.89L933.7 433.78M932.1 433.91L931.1 436.8M934.7 436.67L933.7 439.55M932.1 439.7L931.1 442.59M934.7 442.44L933.7 445.33M932.1 445.48L931.1 448.38M934.7 448.21L933.7 451.1M937.3 422.13L936.3 425.01M939.9 424.9L938.9 427.77M937.3 427.89L936.3 430.77M939.9 430.65L938.9 433.52M937.3 433.65L936.3 436.53M939.9 436.39L938.9 439.27M937.3 439.41L936.3 442.29M939.9 442.14L938.9 445.02M937.3 445.17L936.3 448.05M939.9 447.89L938.9 450.76M942.5 421.92L941.5 424.79M945.1 424.68L944.1 427.54M942.5 427.65L941.5 430.52M945.1 430.4L944.1 433.26M942.5 433.39L941.5 436.26M945.1 436.12L944.1 438.98M942.5 439.12L941.5 441.99M945.1 441.84L944.1 444.7M942.5 444.86L941.5 447.73M945.1 447.56L944.1 450.43M947.7 421.57L946.7 424.43M950.3 424.17L949.3 427.02M947.7 427.29L946.7 430.15M950.3 429.88L949.3 432.74M947.7 433.01L946.7 435.87M950.3 435.6L949.3 438.46M947.7 438.73L946.7 441.59M950.3 441.31L949.3 444.17M947.7 444.45L946.7 447.31M950.3 447.03L949.3 449.89M952.9 421.04L951.9 423.9M955.5 423.63L954.5 426.49M952.9 426.76L951.9 429.61M955.5 429.34L954.5 432.2M952.9 432.47L951.9 435.33M955.5 435.05L954.5 437.91M952.9 438.18L951.9 441.04M955.5 440.77L954.5 443.62M952.9 443.9L951.9 446.75M955.5 446.48L954.5 449.33M958.1 420.51L957.1 423.36M960.7 423.1L959.7 425.95M958.1 426.22L957.1 429.07M960.7 428.8L959.7 431.66M958.1 431.93L957.1 434.78M960.7 434.51L959.7 437.37M958.1 437.64L957.1 440.49M960.7 440.22L959.7 443.07M958.1 443.35L957.1 446.2M960.7 445.93L959.7 448.78M963.3 419.98L962.3 422.83M965.9 422.56L964.9 425.41M963.3 425.68L962.3 428.53M965.9 428.26L964.9 431.12M963.3 431.39L962.3 434.24M965.9 433.97L964.9 436.82M963.3 437.09L962.3 439.95M965.9 439.67L964.9 442.52M963.3 442.8L962.3 445.65M965.9 445.37L964.9 448.23M968.5 419.44L967.5 422.29M971.1 421.89L970.1 424.75M968.5 425.14L967.5 428M971.1 427.6L970.1 430.46M968.5 430.85L967.5 433.7M971.1 433.31L970.1 436.17M968.5 436.55L967.5 439.4M971.1 439.02L970.1 441.88M968.5 442.25L967.5 445.1M971.1 444.73L970.1 447.59M973.7 418.47L972.7 421.34M976.3 420.78L975.3 423.65M973.7 424.2L972.7 427.07M976.3 426.53L975.3 429.41M973.7 429.93L972.7 432.8M976.3 432.28L975.3 435.16M973.7 435.66L972.7 438.53M976.3 438.03L975.3 440.91M973.7 441.39L972.7 444.26M976.3 443.78L975.3 446.66M978.9 417.34L977.9 420.22M981.5 419.67L980.5 422.56M978.9 423.11L977.9 425.99M981.5 425.46L980.5 428.35M978.9 428.88L977.9 431.77M981.5 431.25L980.5 434.15M978.9 434.65L977.9 437.54M981.5 437.04L980.5 439.94M978.9 440.42L977.9 443.31M981.5 442.84L980.5 445.73M984.1 416.2L983.1 419.11M986.7 418.55L985.7 421.47M984.1 422.02L983.1 424.92M986.7 424.39L985.7 427.3M984.1 427.83L983.1 430.74M986.7 430.22L985.7 433.14M984.1 433.64L983.1 436.55M986.7 436.05L985.7 438.97M984.1 439.46L983.1 442.36M986.7 441.89L985.7 444.81M989.3 415.07L988.3 417.99M991.9 417.44L990.9 420.38M989.3 420.92L988.3 423.85M991.9 423.31L990.9 426.25M989.3 426.78L988.3 429.71M991.9 429.19L990.9 432.13M989.3 432.63L988.3 435.56M991.9 435.07L990.9 438M989.3 438.49L988.3 441.42M991.9 440.94L990.9 443.88M994.5 413.93L993.5 416.88M997.1 416.32L996.1 419.28M994.5 419.83L993.5 422.78M997.1 422.24L996.1 425.2M994.5 425.73L993.5 428.67M997.1 428.16L996.1 431.12M994.5 431.62L993.5 434.57M997.1 434.08L996.1 437.04M994.5 437.52L993.5 440.47M997.1 439.99L996.1 442.95M999.7 412.61L998.7 415.54M1002.3 414.73L1001.3 417.64M999.7 418.48L998.7 421.42M1002.3 420.56L1001.3 423.47M999.7 424.35L998.7 427.29M1002.3 426.38L1001.3 429.29M999.7 430.23L998.7 433.17M1002.3 432.2L1001.3 435.11M999.7 436.1L998.7 439.04M1002.3 438.02L1001.3 440.93M1004.9 411.04L1003.9 413.92M1007.5 413.11L1006.5 415.97M1004.9 416.81L1003.9 419.69M1007.5 418.83L1006.5 421.69M1004.9 422.58L1003.9 425.46M1007.5 424.55L1006.5 427.41M1004.9 428.35L1003.9 431.23M1007.5 430.27L1006.5 433.12M1004.9 434.12L1003.9 437M1007.5 435.98L1006.5 438.84M1010.1 409.47L1009.1 412.31M1012.7 411.5L1011.7 414.3M1010.1 415.14L1009.1 417.97M1012.7 417.11L1011.7 419.91M1010.1 420.8L1009.1 423.63M1012.7 422.72L1011.7 425.53M1010.1 426.47L1009.1 429.3M1012.7 428.33L1011.7 431.14M1010.1 432.13L1009.1 434.96M1012.7 433.95L1011.7 436.75M1015.3 407.91L1014.3 410.69M1017.9 409.88L1016.9 412.63M1015.3 413.47L1014.3 416.25M1017.9 415.38L1016.9 418.14M1015.3 419.03L1014.3 421.81M1017.9 420.89L1016.9 423.65M1015.3 424.59L1014.3 427.37M1017.9 426.4L1016.9 429.15M1015.3 430.15L1014.3 432.93M1017.9 431.91L1016.9 434.66M1020.5 406.33L1019.5 409.02M1023.1 408.12L1022.1 410.71M1020.5 411.72L1019.5 414.41M1023.1 413.3L1022.1 415.89M1020.5 417.1L1019.5 419.79M1023.1 418.48L1022.1 421.07M1020.5 422.49L1019.5 425.18M1023.1 423.66L1022.1 426.25M1020.5 427.87L1019.5 430.56M1023.1 428.84L1022.1 431.43M1025.7 404.73L1024.7 407.22M1028.3 406.31L1027.3 408.7M1025.7 409.7L1024.7 412.19M1028.3 411.08L1027.3 413.47M1025.7 414.68L1024.7 417.17M1028.3 415.85L1027.3 418.24M1025.7 419.66L1024.7 422.14M1028.3 420.63L1027.3 423.01M1025.7 424.63L1024.7 427.12M1028.3 425.4L1027.3 427.78M1030.9 403.13L1029.9 405.41M1033.5 404.51L1032.5 406.69M1030.9 407.69L1029.9 409.98M1033.5 408.87L1032.5 411.05M1030.9 412.26L1029.9 414.54M1033.5 413.23L1032.5 415.41M1030.9 416.82L1029.9 419.11M1033.5 417.59L1032.5 419.77M1030.9 421.39L1029.9 423.67M1033.5 421.95L1032.5 424.13M1036.1 401.52L1035.1 403.6M1038.7 402.7L1037.7 404.67M1036.1 405.68L1035.1 407.76M1038.7 406.65L1037.7 408.63M1036.1 409.84L1035.1 411.92M1038.7 410.6L1037.7 412.58M1036.1 413.99L1035.1 416.07M1038.7 414.55L1037.7 416.53M1036.1 418.15L1035.1 420.23M1038.7 418.51L1037.7 420.48M1041.3 399.97L1040.3 401.85M1043.9 401.01L1042.9 402.8M1041.3 403.73L1040.3 405.61M1043.9 404.59L1042.9 406.38M1041.3 407.5L1040.3 409.38M1043.9 408.17L1042.9 409.96M1041.3 411.26L1040.3 413.14M1043.9 411.75L1042.9 413.54M1041.3 415.03L1040.3 416.91M1043.9 415.33L1042.9 417.12M1046.5 398.47L1045.5 400.17M1049.1 399.33L1048.1 400.94M1046.5 401.87L1045.5 403.57M1049.1 402.55L1048.1 404.15M1046.5 405.27L1045.5 406.97M1049.1 405.76L1048.1 407.37M1046.5 408.66L1045.5 410.36M1049.1 408.97L1048.1 410.58M1046.5 412.06L1045.5 413.76M1049.1 412.18L1048.1 413.79M1051.7 396.98L1050.7 398.49M1054.3 397.66L1053.3 399.08M1051.7 400.01L1050.7 401.52M1054.3 400.5L1053.3 401.92M1051.7 403.04L1050.7 404.55M1054.3 403.35L1053.3 404.77M1051.7 406.07L1050.7 407.58M1054.3 406.19L1053.3 407.61M1051.7 409.1L1050.7 410.61M1054.3 409.04L1053.3 410.46M1056.9 395.49L1055.9 396.82M1056.9 398.15L1055.9 399.48M1056.9 400.81L1055.9 402.14M1056.9 403.47L1055.9 404.8M1056.9 406.13L1055.9 407.46" stroke="#fbfbfb" stroke-width="0.8" fill="none" opacity="0.55"/></g><defs><linearGradient id="vs" x1="940" y1="0" x2="1057" y2="0" gradientUnits="userSpaceOnUse"><stop offset="0" stop-color="#000" stop-opacity="0"/><stop offset="0.6" stop-color="#000" stop-opacity="0.07"/><stop offset="1" stop-color="#000" stop-opacity="0.13"/></linearGradient></defs><polygon points="788.2,413.3 801.4,414.6 801.4,412.7 828.3,416.8 828.3,414.9 857.9,419.8 857.9,417.1 884.8,420.4 925,422.6 945,421.8 969.4,419.3 996.9,413.3 1018.8,406.7 1038.6,400.6 1051.8,395.7 1056.7,395.4 1056.7,408.6 1048,414.6 1038.4,420.2 1037.4,421.2 1018.8,434.1 996.9,442.9 969.4,447.8 945,450.4 925,451.7 884.8,448.9 862.8,445.1 829.4,439.6 828.8,436.3 810,432.8 788.2,428.8" fill="url(#vs)"/></g><defs><linearGradient id="cg" x1="0" y1="0" x2="0" y2="1"><stop offset="0" stop-color="#10b010"/><stop offset="0.12" stop-color="#30c020"/><stop offset="0.16" stop-color="#e8e838"/><stop offset="0.52" stop-color="#ecdc38"/><stop offset="0.58" stop-color="#f0a030"/><stop offset="0.84" stop-color="#ee9030"/><stop offset="0.88" stop-color="#d03838"/><stop offset="1" stop-color="#c83030"/></linearGradient></defs><polygon points="793.4,414.4 796.6,413.4 797.2,428.2 794.2,429.8" fill="url(#cg)"/><polygon points="834,416 837.2,415 837.8,438.4 834.8,440" fill="url(#cg)"/><polygon points="968.4,418.6 971.6,417.6 972.2,445.8 969.2,447.4" fill="url(#cg)"/><path d="M771.1 515.5H1065.6M771.1 523.9H1065.6M771.1 532.2H1065.6M771.1 540.5H1065.6M771.1 548.8H1065.6M771.1 556.9H1065.6M771.1 564.6H1065.6M771.1 572.9H1065.6M771.1 515.5V572.9M795.5 515.5V572.9M955 515.5V572.9M991.6 515.5V572.9M1028.4 515.5V572.9M1065.6 515.5V572.9" stroke="#333" stroke-width="0.55" fill="none"/><text x="773.3" y="570.2" font-size="4.1" fill="#333">Change</text><text x="799.4" y="570.2" font-size="4.1" fill="#333">Name of change:</text><text x="958.3" y="570.2" font-size="4.1" fill="#333">Date:</text><text x="995.7" y="570.2" font-size="4.1" fill="#333">Approved by:</text><text x="1032.3" y="570.2" font-size="4.1" fill="#333">Signature:</text><path d="M771.1 573V585.4M1065.6 573V585.4" stroke="#444" stroke-width="0.8" stroke-dasharray="0.9 1" fill="none"/><text x="1061" y="581.1" font-size="4.35" fill="#333" text-anchor="end">Coordinate system S-JTSK, Elevation system Bpv</text><path d="M771.1 585.4H1065.6V695.5H771.1ZM771.1 613.7H1065.6M771.1 625.9H983.2M771.1 638.1H983.2M771.1 675.2H983.2M841.8 585.4V613.7M912.5 585.4V613.7M983.2 585.4V695.5M1028.4 613.7V695.5M983.2 622H1065.6M983.2 630.4H1065.6M983.2 638.7H1065.6M983.2 646.4H1065.6M983.2 670.8H1028.4" stroke="#333" stroke-width="0.55" fill="none"/><text x="773.3" y="589.4" font-size="4.2" fill="#333">Drawn by:</text><text x="844.6" y="589.4" font-size="4.2" fill="#333">Checked by:</text><text x="915.3" y="589.4" font-size="4.2" fill="#333">Approved by:</text><text x="773.3" y="618.4" font-size="4.2" fill="#333">Contractor:</text><text x="773.3" y="630.6" font-size="4.2" fill="#333">Designer:</text><text x="773.3" y="642.4" font-size="4.2" fill="#333">Project:</text><text x="773.3" y="678.6" font-size="4.2" fill="#333">Appendix:</text><text x="986.8" y="617.8" font-size="4.2" fill="#333">Project no.:</text><text x="986.8" y="626.2" font-size="4.2" fill="#333">Date:</text><text x="986.8" y="634.5" font-size="4.2" fill="#333">Format:</text><text x="986.8" y="642.5" font-size="4.2" fill="#333">Scale:</text><text x="986.8" y="650.6" font-size="4.2" fill="#333">Design stage:</text><text x="986.8" y="674.7" font-size="4.2" fill="#333">Attachment no.:</text><text x="1032.3" y="650.6" font-size="4.2" fill="#333">Set:</text><text x="803" y="618.6" font-size="4.3" fill="#333">Investor, a.s.</text><text x="802.4" y="630.8" font-size="4.3" fill="#333">Projektant s.r.o.</text><text x="773.3" y="611.2" font-size="4.9" fill="#333" textLength="43.5" lengthAdjust="spacingAndGlyphs">Ing. Štěpán Weiss</text><text x="844.6" y="611.2" font-size="4.9" fill="#333" textLength="48.4" lengthAdjust="spacingAndGlyphs">Ing. Daniel Turanský</text><text x="915.3" y="611.2" font-size="4.9" fill="#333" textLength="47.1" lengthAdjust="spacingAndGlyphs">Ing. Radek Voňavka</text><text x="1029.6" y="620" font-size="5.6" fill="#333">32489</text><text x="1029.6" y="628.4" font-size="5.6" fill="#333">1.11.2025</text><text x="1029.6" y="636.7" font-size="5.6" fill="#333">A2</text><text x="1029.6" y="644.6" font-size="5.6" fill="#333">1:50</text><text x="879.8" y="660.2" font-size="12.8" fill="#222" stroke="#222" stroke-width="0.25" text-anchor="middle" textLength="98.4" lengthAdjust="spacingAndGlyphs">RETAINING WALL</text><text x="865.4" y="688.8" font-size="12.6" fill="#222" stroke="#222" stroke-width="0.25" text-anchor="middle" textLength="69.6" lengthAdjust="spacingAndGlyphs">APPENDIX A</text><text x="992.3" y="662.9" font-size="10.4" fill="#333" stroke="#333" stroke-width="0.2" textLength="12.5" lengthAdjust="spacingAndGlyphs">TD</text><text x="992.2" y="688.7" font-size="10.2" fill="#333" stroke="#333" stroke-width="0.2" textLength="17.8" lengthAdjust="spacingAndGlyphs">3.21</text><path d="M19.4 20.5 h9.4 l4 4 v13.8 h-13.4 z" fill="#fff" stroke="#222" stroke-width="0.9" stroke-linejoin="round"/><path d="M28.8 20.5 v4 h4" fill="#eee" stroke="#222" stroke-width="0.8" stroke-linejoin="round"/><path d="M48.8 20.4 h7.4 l2.8 2.8 v9 h-10.2 z" fill="#fff" stroke="#333" stroke-width="0.8"/><path d="M50.4 23.6h4.2M50.4 25.2h6.6M50.4 26.8h6.6" stroke="#777" stroke-width="0.8"/><path d="M46.4 28.2 h2.2 l0.8 1.2 h13 v9 h-16 z" fill="#e0a000" stroke="#5a4000" stroke-width="0.6"/><path d="M46.6 38.4 l1.8 -8.2 h14.6 l-1.8 8.2 z" fill="#ffc20a" stroke="#5a4000" stroke-width="0.7" stroke-linejoin="round"/><rect x="57.6" y="29.8" width="3.6" height="1.4" fill="#b89a50"/><path d="M71.1 28.3 h4.8 l-2.4 2.6 z" fill="#111"/><path d="M83.7 20.4 h17.8 v17.8 h-15.4 l-2.4 -2.4 z" fill="#68689a" stroke="#1f1f3c" stroke-width="0.9" stroke-linejoin="round"/><rect x="87.2" y="21.4" width="11.8" height="9" fill="#f6f6f6" stroke="#2a2a48" stroke-width="0.5"/><path d="M88.6 23.4h9M88.6 25.4h9M88.6 27.4h9M88.6 29.2h9" stroke="#777" stroke-width="0.8"/><rect x="88.2" y="33.4" width="10.4" height="4.8" fill="#8a8ab0" stroke="#1f1f3c" stroke-width="0.5"/><rect x="91.2" y="34" width="5" height="4" fill="#fff"/><rect x="89.6" y="34.4" width="1" height="3" fill="#333"/><path d="M109.10000000000001 28.3 h4.6 l-2.3 2.6 z" fill="#111"/><path d="M133.8 28.6 L141.4 23.2 V26.4 C147 26.4 150.6 29.6 151.2 35.8 C149.2 32 146.4 31 141.4 31.2 V34 Z" fill="#999"/><path d="M158.9 28.6 h4.2 l-2.1 2.4 z" fill="#aaa"/><path d="M188.8 28.6 L181.2 23.2 V26.4 C175.6 26.4 172 29.6 171.6 35.8 C173.6 32 176.4 31 181.2 31.2 V34 Z" fill="#999"/><path d="M197.20000000000002 28.6 h4.2 l-2.1 2.4 z" fill="#aaa"/><path d="M205.4 14v32" stroke="#d6d6d6" stroke-width="1"/><path d="M211.8 19.8 h7.6 l3 3 v10.4 h-10.6 z" fill="#fff" stroke="#555" stroke-width="0.8" stroke-linejoin="round"/><path d="M219.4 19.8 v3 h3" fill="none" stroke="#555" stroke-width="0.6"/><path d="M213.60000000000002 24.0h7.0" stroke="#999" stroke-width="0.7"/><path d="M213.60000000000002 25.7h7.0" stroke="#999" stroke-width="0.7"/><path d="M213.60000000000002 27.4h7.0" stroke="#999" stroke-width="0.7"/><path d="M213.60000000000002 29.099999999999998h7.0" stroke="#999" stroke-width="0.7"/><path d="M213.60000000000002 30.799999999999997h7.0" stroke="#999" stroke-width="0.7"/><path d="M219.4 24.6 h7.800000000000001 l3 3 v11 h-10.8 z" fill="#fff" stroke="#555" stroke-width="0.8" stroke-linejoin="round"/><path d="M227.20000000000002 24.6 v3 h3" fill="none" stroke="#555" stroke-width="0.6"/><path d="M221.20000000000002 28.8h7.200000000000001" stroke="#999" stroke-width="0.7"/><path d="M221.20000000000002 30.5h7.200000000000001" stroke="#999" stroke-width="0.7"/><path d="M221.20000000000002 32.2h7.200000000000001" stroke="#999" stroke-width="0.7"/><path d="M221.20000000000002 33.900000000000006h7.200000000000001" stroke="#999" stroke-width="0.7"/><path d="M221.20000000000002 35.60000000000001h7.200000000000001" stroke="#999" stroke-width="0.7"/><path d="M221.20000000000002 37.30000000000001h7.200000000000001" stroke="#999" stroke-width="0.7"/><path d="M237.1 28.3 h4.6 l-2.3 2.6 z" fill="#111"/><rect x="249.8" y="20" width="13.8" height="16.2" rx="0.4" fill="#e99a22" stroke="#6a3c00" stroke-width="0.7"/><rect x="254.4" y="20" width="5.2" height="2.2" fill="#f8e08a" stroke="#6a3c00" stroke-width="0.4"/><path d="M258.4 24.6 h7.800000000000001 l3 3 v11 h-10.8 z" fill="#fff" stroke="#555" stroke-width="0.8" stroke-linejoin="round"/><path d="M266.2 24.6 v3 h3" fill="none" stroke="#555" stroke-width="0.6"/><path d="M260.2 28.8h7.200000000000001" stroke="#999" stroke-width="0.7"/><path d="M260.2 30.5h7.200000000000001" stroke="#999" stroke-width="0.7"/><path d="M260.2 32.2h7.200000000000001" stroke="#999" stroke-width="0.7"/><path d="M260.2 33.900000000000006h7.200000000000001" stroke="#999" stroke-width="0.7"/><path d="M260.2 35.60000000000001h7.200000000000001" stroke="#999" stroke-width="0.7"/><path d="M260.2 37.30000000000001h7.200000000000001" stroke="#999" stroke-width="0.7"/><path d="M275.09999999999997 28.3 h4.6 l-2.3 2.6 z" fill="#111"/><path d="M307 25.4 v-4.4 h9.6 v4.4" fill="#fff" stroke="#333" stroke-width="0.8"/><path d="M305.6 25.2 h12.4 l1.4 2 v4.4 q0 1 -1 1 h-13.2 q-1 0 -1 -1 v-4.4 z" fill="#c4aa7a" stroke="#3a3020" stroke-width="0.8" stroke-linejoin="round"/><rect x="306.6" y="29.2" width="10.4" height="2.6" fill="#333"/><rect x="307" y="30.6" width="9.6" height="7.8" fill="#f2f2f2" stroke="#333" stroke-width="0.8"/><path d="M308.6 33h6.4M308.6 34.6h6.4M308.6 36.2h6.4" stroke="#999" stroke-width="0.8"/><rect x="332.2" y="20.4" width="13.2" height="18" rx="0.6" fill="#fff" stroke="#333" stroke-width="0.8"/><text x="333.6" y="24.4" font-size="4.4" font-weight="bold" fill="#111" textLength="7.4" lengthAdjust="spacingAndGlyphs">PDF</text><text x="333.6" y="29.2" font-size="4.4" font-weight="bold" fill="#111" textLength="7.4" lengthAdjust="spacingAndGlyphs">CAD</text><rect x="342" y="30.2" width="8" height="8.4" fill="#44447a" stroke="#1c1c38" stroke-width="0.6"/><rect x="343.4" y="30.8" width="5.2" height="3" fill="#9a9ac0"/><rect x="344.4" y="35.6" width="3.4" height="3" fill="#0a0a0a"/><circle cx="383.8" cy="29.7" r="6.9" fill="#cccc44" stroke="#98981c" stroke-width="0.6"/><path d="M382.29 22.97 L382.41 20.50 L385.19 20.50 L385.31 22.97 L387.50 23.87 L389.32 22.22 L391.28 24.18 L389.63 26.00 L390.53 28.19 L393.00 28.31 L393.00 31.09 L390.53 31.21 L389.63 33.40 L391.28 35.22 L389.32 37.18 L387.50 35.53 L385.31 36.43 L385.19 38.90 L382.41 38.90 L382.29 36.43 L380.10 35.53 L378.28 37.18 L376.32 35.22 L377.97 33.40 L377.07 31.21 L374.60 31.09 L374.60 28.31 L377.07 28.19 L377.97 26.00 L376.32 24.18 L378.28 22.22 L380.10 23.87 Z" fill="#cccc44" stroke="#98981c" stroke-width="0.6" stroke-linejoin="round"/><circle cx="383.8" cy="29.7" r="6.5" fill="#cccc44"/><circle cx="383.8" cy="29.7" r="3.6" fill="#f0f0f0" stroke="#98981c" stroke-width="0.6"/><path d="M402.5 14v32" stroke="#d6d6d6" stroke-width="1"/><rect x="410.5" y="18.4" width="5.6" height="5.4" fill="#fff" stroke="#888" stroke-width="0.7" stroke-dasharray="1 0.6"/><circle cx="416" cy="22" r="2.3" fill="#fff" stroke="#444" stroke-width="0.8"/><path d="M417.7 23.7l1.8 1.9" stroke="#444" stroke-width="1.1" stroke-linecap="round"/><circle cx="430.4" cy="21.4" r="3.5" fill="#fff" stroke="#444" stroke-width="0.9"/><path d="M433 24 l2.6 2.6" stroke="#444" stroke-width="1.2" stroke-linecap="round"/><path d="M428.2 21.4h4.4M430.4 19.2v4.4" stroke="#222" stroke-width="1.1"/><path d="M442.4 22.2h8.8M446.8 17.8v8.8" stroke="#333" stroke-width="1"/><path d="M442 22.2l1.8-1.5v3zM451.6 22.2l-1.8-1.5v3zM446.8 17.4l-1.5 1.8h3zM446.8 27l-1.5-1.8h3z" fill="#333"/><rect x="410.7" y="33.5" width="8.2" height="7.8" fill="#fff" stroke="#777" stroke-width="0.9"/><path d="M412 36.2v-1.4h1.5M416.1 34.8h1.5v1.4M417.6 38.6v1.4h-1.5M413.5 40h-1.5v-1.4" fill="none" stroke="#555" stroke-width="0.9"/><circle cx="430.4" cy="36.8" r="3.5" fill="#fff" stroke="#444" stroke-width="0.9"/><path d="M433 39.4 l2.6 2.6" stroke="#444" stroke-width="1.2" stroke-linecap="round"/><path d="M428.2 36.8h4.4" stroke="#222" stroke-width="1.1"/><circle cx="446.2" cy="36.8" r="3.5" fill="#fff" stroke="#444" stroke-width="0.9"/><path d="M448.8 39.4 l2.6 2.6" stroke="#444" stroke-width="1.2" stroke-linecap="round"/><path d="M444.4 37.6c0.4-2.4 3.4-2.6 4-0.6" fill="none" stroke="#222" stroke-width="0.9"/><path d="M443.6 36l0.6 2.4 2-1.2z" fill="#222"/><path d="M460.2 14v32" stroke="#d6d6d6" stroke-width="1"/><rect x="464" y="14" width="208.2" height="15.6" fill="#fff"/><circle cx="471.7" cy="20.6" r="2.9" fill="#f6a300"/><path d="M470.3 23 h2.8 v2.4 h-2.8z" fill="#333"/><rect x="485.8" y="21.6" width="5.6" height="4.4" fill="#f6a300"/><path d="M483.6 21.8 v-1.6 a2 2 0 0 1 4 0" fill="none" stroke="#f08a00" stroke-width="1"/><rect x="488" y="23" width="1.2" height="1.6" fill="#7a4a00"/><rect x="497.2" y="17.2" width="9.6" height="9.4" fill="#000"/><text x="510" y="24.4" font-size="7.5" fill="#222">Dimensions</text><path d="M663.4000000000001 20.9 h4.6 l-2.3 2.6 z" fill="#111"/><path d="M676 17.6 h6 l-6 5.4 z" fill="#666"/><path d="M684 18.6 v5.2 h-4.4" fill="none" stroke="#7a1f8c" stroke-width="1.7"/><path d="M676.4 23.8 l3.6 -2.8 v5.6 z" fill="#7a1f8c"/><path d="M692.5 14v32" stroke="#d6d6d6" stroke-width="1"/><path d="M700.9 18 h3.2 l-3.2 3z" fill="#555"/><path d="M705.4 18.6 c2.6 0.2 3.4 1.6 3.2 3.6" fill="none" stroke="#3f8bd8" stroke-width="1.15" stroke-dasharray="1.6 0.8"/><path d="M701.2 23 h3 l-3 2.8zM705 23 h3.4 l-3.4 3.2z" fill="none" stroke="#3f8bd8" stroke-width="0.8"/><path d="M717.2 18 h3.2 l-3.2 3z" fill="#555"/><path d="M721.6 18.6 c2.6 0.2 3.4 1.6 3.2 3.6" fill="none" stroke="#3f8bd8" stroke-width="1.15" stroke-dasharray="1.6 0.8"/><path d="M721.4 22.8 h3.6 l-3.6 3.6z" fill="none" stroke="#3f8bd8" stroke-width="0.8"/><rect x="733" y="20.6" width="5.6" height="5" rx="0.8" fill="#f0f0f0" stroke="#555" stroke-width="1"/><path d="M734.6 20.4 l1.6-1.8 h4.4 v4.6 l-1.8 1.6" fill="none" stroke="#3f8bd8" stroke-width="1.15"/><path d="M704.1 33.4 v8.6 h-3.6z" fill="#888" stroke="#555" stroke-width="0.5"/><path d="M705.5 33.4 v8.6 h3.6z" fill="#3f8bd8"/><path d="M717.4 36.4 a4 4 0 0 1 7 -1.6" fill="none" stroke="#3f8bd8" stroke-width="1"/><path d="M724.8 38.4 a4 4 0 0 1 -7 1.6" fill="none" stroke="#3f8bd8" stroke-width="1"/><path d="M725.4 33.2 v2.6 h-2.6zM716.8 41.6 v-2.6 h2.6z" fill="#3f8bd8"/><path d="M749.4 14v32" stroke="#d6d6d6" stroke-width="1"/><path d="M758.2 18.2 h7.6 l-2.8 3.6 v4.2 l-2 -0.8 v-3.4 z" fill="#777" stroke="#444" stroke-width="0.6" stroke-linejoin="round"/><path d="M757.6 34.2 h9.2" stroke="#3f8bd8" stroke-width="1"/><rect x="757.6" y="36.6" width="9.2" height="3.6" fill="#fff" stroke="#444" stroke-width="0.8"/><path d="M759.4 38.4v1.6M761.2 38.4v1.6M763 38.4v1.6M764.8 38.4v1.6" stroke="#444" stroke-width="0.6"/><text x="469" y="40.6" font-size="8.4" fill="#333" stroke="#333" stroke-width="0.25">A</text><text x="483.6" y="40.6" font-size="8.4" fill="#333" stroke="#333" stroke-width="0.25">A</text><path d="M489.4 34v7M491.4 34v7M490.8 34h1.2M490.8 41h1.2" stroke="#444" stroke-width="0.6"/><text x="503.4" y="38.6" font-size="6.6" fill="#333">A</text><path d="M500.6 41 c1.6 -1.6 3.6 -2.2 8 -2.4" fill="none" stroke="#3f8bd8" stroke-width="1.15"/><path d="M515.6 41.2 l8 -7.8" stroke="#3f8bd8" stroke-width="1"/><circle cx="535.7" cy="37.6" r="4.1" fill="none" stroke="#3f8bd8" stroke-width="1.15"/><circle cx="535.7" cy="37.6" r="0.7" fill="#333"/><rect x="547.8" y="34.4" width="8.6" height="5.6" fill="none" stroke="#3f8bd8" stroke-width="1"/><path d="M563.4 41.6 v-8 h5.6 l3.2 3 l-1.6 5" fill="none" stroke="#555" stroke-width="0.9"/><path d="M564 41.8 h5.4" stroke="#3f8bd8" stroke-width="1.15" stroke-dasharray="1 0.7"/><text x="579.2" y="40.6" font-size="6.4" fill="#444">B</text><path d="M584.8 34.2 c3.4 -0.4 3.6 2.2 0.8 3.6 c0.6 1.2 1.4 2.2 2.2 3.2" fill="none" stroke="#3f8bd8" stroke-width="1.15"/><path d="M597.6 38.6 l3.6 -3 l3.4 2.4" fill="none" stroke="#3f8bd8" stroke-width="1.15"/><path d="M597 37.4 l2.6 3.8" stroke="#3f8bd8" stroke-width="0.8"/><text x="597.6" y="35.6" font-size="3.6" fill="#333">12</text><path d="M611.8 35.6 v6 M620 35.6 v6 M611.8 38.6 h8.2" fill="none" stroke="#3f8bd8" stroke-width="1.15"/><text x="613.6" y="36" font-size="3.6" fill="#333">11</text><path d="M628.4 35 l7.4 5.8 h-5.4 z" fill="none" stroke="#3f8bd8" stroke-width="1.15"/><text x="626.6" y="35" font-size="3.4" fill="#333">42</text><rect x="643.2" y="33.6" width="9.8" height="7.8" rx="0.6" fill="#fff" stroke="#222" stroke-width="1"/><text x="644.6" y="39.2" font-size="4" font-weight="bold" fill="#222" textLength="7" lengthAdjust="spacingAndGlyphs">CAD</text><rect x="659" y="33.4" width="9.4" height="8.4" fill="#ddd" stroke="#777" stroke-width="0.6"/><path d="M662.1 33.4v8.4M665.3 33.4v8.4" stroke="#666" stroke-width="1.1"/><path d="M659 35h9.4" stroke="#3f8bd8" stroke-width="0.7"/><rect x="675.4" y="33.4" width="9.6" height="8.2" fill="#fff" stroke="#777" stroke-width="0.7"/><path d="M675.8 41.2 l2.8 -3.4 l1.8 1.8 l2 -2.6 l2.2 2.6 v1.6z" fill="#2a8be0"/><rect x="676.6" y="34.4" width="1.8" height="1.8" fill="#f6a300"/><path d="M1292.8 8.7h6.4" stroke="#444" stroke-width="0.9"/><rect x="1320.6" y="5.4" width="4.6" height="3.4" fill="#fff" stroke="#222" stroke-width="0.7"/><path d="M1322 5.2 v-1.2 h4.6 v3.4 h-1.2" fill="none" stroke="#222" stroke-width="0.7"/><path d="M1349 3.4 l6.6 6.6 M1355.6 3.4 l-6.6 6.6" stroke="#222" stroke-width="1"/><text x="1344.9" y="26" font-size="11.6" font-weight="bold" fill="#1f74c8" text-anchor="middle">?</text><text x="1344.8" y="38" font-size="7.4" fill="#222" text-anchor="middle">Help</text><path d="M1359.8 28.2 h4 l-2.0 2.4 z" fill="#111"/><path d="M4.6 57.2h6.4M7.8 54v6.4" stroke="#119a11" stroke-width="1.7"/><path d="M21.4 54.4l5.4 5.6M26.8 54.4l-5.4 5.6" stroke="#d01010" stroke-width="1.7"/><rect x="1.2" y="1.4" width="9.2" height="9.6" rx="1.6" fill="#e9efe2" stroke="#6a8a4a" stroke-width="0.8"/><path d="M2 8.4 c3 -0.4 5 -1.6 7.6 -4.4 v4.4z" fill="#3b6a9a"/><path d="M2 6.4 c3 -0.2 5 -1.2 7.6 -3.4" stroke="#d9a520" stroke-width="1.4" fill="none"/><path d="M2 9.6h7.6" stroke="#3c8a2c" stroke-width="1.2"/><rect x="76.2" y="728.6" width="9.6" height="6" rx="1.4" fill="#35a850"/><text x="76.6" y="733.8" font-size="5.4" font-weight="bold" fill="#1a3a9a" textLength="8.8" lengthAdjust="spacingAndGlyphs">SAB</text><rect x="89.4" y="723.4" width="16" height="16" fill="#cfe4f7" stroke="#9cc9f0" stroke-width="0.8"/><path d="M93.4 727.6h8.6M93.4 731h6.2M93.4 734.2h8" stroke="#111" stroke-width="1.5"/><circle cx="100.4" cy="730.8" r="1" fill="#111"/><circle cx="96" cy="734.2" r="1" fill="#111"/><text x="111.8" y="734.6" font-size="7.4" fill="#222">Snap :</text><rect x="135.6" y="723.4" width="25" height="16" fill="#cfe4f7" stroke="#9cc9f0" stroke-width="0.8"/><path d="M151.2 723.4v16" stroke="#9cc9f0" stroke-width="0.8"/><path d="M139.6 726.4 v9.6 h8.6" fill="none" stroke="#222" stroke-width="0.9"/><path d="M139 735.6 l8.4 -8.6" stroke="#e0352a" stroke-width="0.9"/><path d="M141 729.4 l4.6 5.4 h-4.6z" fill="#f0b428"/><circle cx="147.6" cy="736" r="0.8" fill="#222"/><path d="M154.39999999999998 730.6999999999999 h3.6 l-1.8 2.2 z" fill="#111"/><rect x="161" y="723.4" width="25" height="16" fill="#cfe4f7" stroke="#9cc9f0" stroke-width="0.8"/><path d="M176.6 723.4v16" stroke="#9cc9f0" stroke-width="0.8"/><path d="M165 735.2 v-4 a3.9 3.9 0 0 1 7.8 0 v4 h-2.6 v-4 a1.3 1.3 0 0 0 -2.6 0 v4z" fill="#d5202a"/><rect x="165" y="733.6" width="2.6" height="1.7" fill="#eee"/><rect x="170.2" y="733.6" width="2.6" height="1.7" fill="#eee"/><path d="M179.79999999999998 730.6999999999999 h3.6 l-1.8 2.2 z" fill="#111"/><path d="M190.4 735.4 l4.4 -4.6" stroke="#1f6fd0" stroke-width="1.6" stroke-linecap="round"/><path d="M194.2 731.6 a2.6 2.6 0 0 1 3.4 -3.6 l-1.6 1.8 l1.2 1.2 l1.7 -1.6 a2.6 2.6 0 0 1 -3.6 3.2z" fill="#1f6fd0"/></svg>
</div></body></html>
